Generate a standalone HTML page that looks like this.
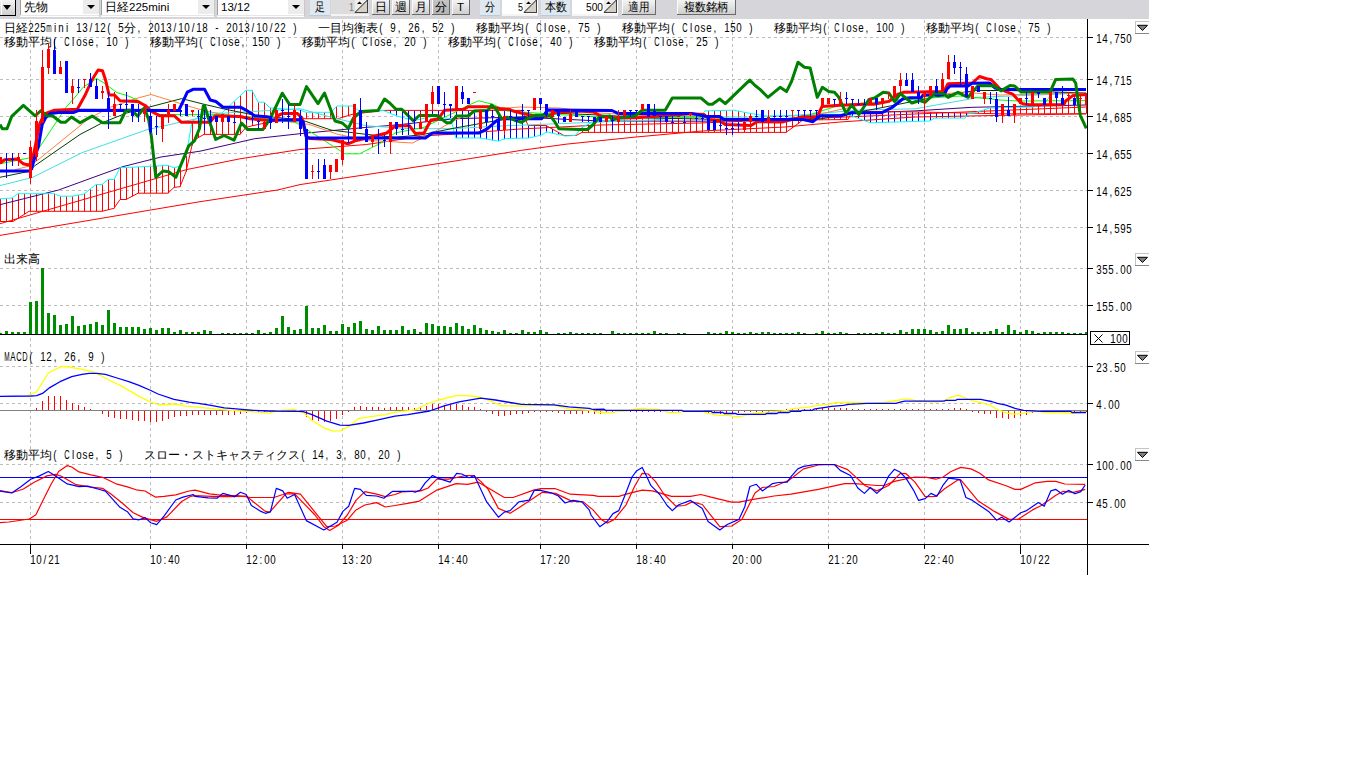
<!DOCTYPE html>
<html><head><meta charset="utf-8"><style>html,body{margin:0;padding:0;width:1366px;height:768px;overflow:hidden;background:#fff}</style></head>
<body><svg width="1366" height="768" viewBox="0 0 1366 768" style="position:absolute;left:0;top:0" font-family='"Liberation Sans", sans-serif'>
<rect width="1366" height="768" fill="#fff"/>
<line x1="30.5" y1="20" x2="30.5" y2="544" stroke="#bdbdbd" stroke-dasharray="3,3"/><line x1="150.5" y1="20" x2="150.5" y2="544" stroke="#bdbdbd" stroke-dasharray="3,3"/><line x1="246.5" y1="20" x2="246.5" y2="544" stroke="#bdbdbd" stroke-dasharray="3,3"/><line x1="342.5" y1="20" x2="342.5" y2="544" stroke="#bdbdbd" stroke-dasharray="3,3"/><line x1="438.5" y1="20" x2="438.5" y2="544" stroke="#bdbdbd" stroke-dasharray="3,3"/><line x1="540.5" y1="20" x2="540.5" y2="544" stroke="#bdbdbd" stroke-dasharray="3,3"/><line x1="636.5" y1="20" x2="636.5" y2="544" stroke="#bdbdbd" stroke-dasharray="3,3"/><line x1="732.5" y1="20" x2="732.5" y2="544" stroke="#bdbdbd" stroke-dasharray="3,3"/><line x1="828.5" y1="20" x2="828.5" y2="544" stroke="#bdbdbd" stroke-dasharray="3,3"/><line x1="924.5" y1="20" x2="924.5" y2="544" stroke="#bdbdbd" stroke-dasharray="3,3"/><line x1="1020.5" y1="20" x2="1020.5" y2="544" stroke="#bdbdbd" stroke-dasharray="3,3"/><line x1="0" y1="37.5" x2="1087" y2="37.5" stroke="#bdbdbd" stroke-dasharray="3,3"/><line x1="0" y1="79.5" x2="1087" y2="79.5" stroke="#bdbdbd" stroke-dasharray="3,3"/><line x1="0" y1="116.5" x2="1087" y2="116.5" stroke="#bdbdbd" stroke-dasharray="3,3"/><line x1="0" y1="153.5" x2="1087" y2="153.5" stroke="#bdbdbd" stroke-dasharray="3,3"/><line x1="0" y1="190.5" x2="1087" y2="190.5" stroke="#bdbdbd" stroke-dasharray="3,3"/><line x1="0" y1="227.5" x2="1087" y2="227.5" stroke="#bdbdbd" stroke-dasharray="3,3"/><line x1="0" y1="268.5" x2="1087" y2="268.5" stroke="#bdbdbd" stroke-dasharray="3,3"/><line x1="0" y1="305.5" x2="1087" y2="305.5" stroke="#bdbdbd" stroke-dasharray="3,3"/><line x1="0" y1="366.5" x2="1087" y2="366.5" stroke="#bdbdbd" stroke-dasharray="3,3"/><line x1="0" y1="403.5" x2="1087" y2="403.5" stroke="#bdbdbd" stroke-dasharray="3,3"/><line x1="0" y1="464.5" x2="1087" y2="464.5" stroke="#bdbdbd" stroke-dasharray="3,3"/><line x1="0" y1="502.5" x2="1087" y2="502.5" stroke="#bdbdbd" stroke-dasharray="3,3"/>
<g clip-path="url(#cm)"><rect x="0" y="198.8" width="1" height="22.7" fill="#ff0000"/><rect x="6" y="198.4" width="1" height="23.1" fill="#ff0000"/><rect x="12" y="198.0" width="1" height="23.5" fill="#ff0000"/><rect x="18" y="193.7" width="1" height="24.6" fill="#ff0000"/><rect x="24" y="193.7" width="1" height="20.8" fill="#ff0000"/><rect x="30" y="193.7" width="1" height="17.6" fill="#ff0000"/><rect x="36" y="193.7" width="1" height="17.6" fill="#ff0000"/><rect x="42" y="193.7" width="1" height="17.6" fill="#ff0000"/><rect x="48" y="193.7" width="1" height="17.6" fill="#ff0000"/><rect x="54" y="193.7" width="1" height="17.6" fill="#ff0000"/><rect x="60" y="196.2" width="1" height="15.1" fill="#ff0000"/><rect x="66" y="196.2" width="1" height="15.1" fill="#ff0000"/><rect x="72" y="196.2" width="1" height="15.1" fill="#ff0000"/><rect x="78" y="195.1" width="1" height="16.2" fill="#ff0000"/><rect x="84" y="194.0" width="1" height="17.3" fill="#ff0000"/><rect x="90" y="189.2" width="1" height="22.1" fill="#ff0000"/><rect x="96" y="184.5" width="1" height="26.8" fill="#ff0000"/><rect x="102" y="184.5" width="1" height="26.8" fill="#ff0000"/><rect x="108" y="179.5" width="1" height="30.3" fill="#ff0000"/><rect x="114" y="179.5" width="1" height="28.8" fill="#ff0000"/><rect x="120" y="167.8" width="1" height="31.7" fill="#ff0000"/><rect x="126" y="167.5" width="1" height="32.0" fill="#ff0000"/><rect x="132" y="167.2" width="1" height="29.1" fill="#ff0000"/><rect x="138" y="166.9" width="1" height="26.3" fill="#ff0000"/><rect x="144" y="166.6" width="1" height="26.6" fill="#ff0000"/><rect x="150" y="166.3" width="1" height="26.9" fill="#ff0000"/><rect x="156" y="166.0" width="1" height="27.2" fill="#ff0000"/><rect x="162" y="165.7" width="1" height="27.5" fill="#ff0000"/><rect x="168" y="165.4" width="1" height="27.8" fill="#ff0000"/><rect x="174" y="167.8" width="1" height="19.6" fill="#ff0000"/><rect x="180" y="166.0" width="1" height="20.7" fill="#ff0000"/><rect x="186" y="156.0" width="1" height="15.7" fill="#ff0000"/><rect x="192" y="121.5" width="1" height="23.8" fill="#ff0000"/><rect x="198" y="117.2" width="1" height="20.6" fill="#ff0000"/><rect x="204" y="113.0" width="1" height="21.4" fill="#ff0000"/><rect x="210" y="113.0" width="1" height="21.4" fill="#ff0000"/><rect x="216" y="113.0" width="1" height="21.4" fill="#ff0000"/><rect x="222" y="113.0" width="1" height="21.4" fill="#ff0000"/><rect x="228" y="107.2" width="1" height="27.2" fill="#ff0000"/><rect x="234" y="101.5" width="1" height="32.9" fill="#ff0000"/><rect x="240" y="95.9" width="1" height="38.5" fill="#ff0000"/><rect x="246" y="90.3" width="1" height="37.0" fill="#ff0000"/><rect x="252" y="90.3" width="1" height="35.5" fill="#ff0000"/><rect x="258" y="102.2" width="1" height="22.3" fill="#ff0000"/><rect x="264" y="102.2" width="1" height="21.1" fill="#ff0000"/><rect x="270" y="107.9" width="1" height="14.1" fill="#ff0000"/><rect x="276" y="108.3" width="1" height="12.9" fill="#ff0000"/><rect x="282" y="108.7" width="1" height="11.7" fill="#ff0000"/><rect x="288" y="109.2" width="1" height="10.5" fill="#ff0000"/><rect x="294" y="109.6" width="1" height="9.3" fill="#ff0000"/><rect x="300" y="110.0" width="1" height="8.7" fill="#ff0000"/><rect x="306" y="112.3" width="1" height="6.4" fill="#ff0000"/><rect x="312" y="112.3" width="1" height="6.4" fill="#ff0000"/><rect x="318" y="112.3" width="1" height="6.4" fill="#ff0000"/><rect x="324" y="112.3" width="1" height="6.4" fill="#ff0000"/><rect x="330" y="112.3" width="1" height="6.4" fill="#ff0000"/><rect x="336" y="107.0" width="1" height="11.7" fill="#ff0000"/><rect x="342" y="106.0" width="1" height="11.5" fill="#ff0000"/><rect x="348" y="106.0" width="1" height="9.6" fill="#ff0000"/><rect x="354" y="106.8" width="1" height="7.3" fill="#ff0000"/><rect x="360" y="111.4" width="1" height="2.0" fill="#ff0000"/><rect x="366" y="111.1" width="1" height="1.5" fill="#ff0000"/><rect x="390" y="110.4" width="1" height="2.8" fill="#0000ff"/><rect x="396" y="110.4" width="1" height="5.2" fill="#0000ff"/><rect x="402" y="110.4" width="1" height="7.0" fill="#0000ff"/><rect x="408" y="110.4" width="1" height="8.6" fill="#0000ff"/><rect x="414" y="110.4" width="1" height="10.2" fill="#0000ff"/><rect x="420" y="110.4" width="1" height="8.8" fill="#0000ff"/><rect x="426" y="110.4" width="1" height="7.5" fill="#0000ff"/><rect x="432" y="110.4" width="1" height="6.1" fill="#0000ff"/><rect x="438" y="110.4" width="1" height="6.8" fill="#0000ff"/><rect x="444" y="110.4" width="1" height="7.4" fill="#0000ff"/><rect x="450" y="110.4" width="1" height="8.1" fill="#0000ff"/><rect x="456" y="110.4" width="1" height="27.6" fill="#0000ff"/><rect x="462" y="110.4" width="1" height="27.6" fill="#0000ff"/><rect x="468" y="110.4" width="1" height="27.6" fill="#0000ff"/><rect x="474" y="110.4" width="1" height="27.6" fill="#0000ff"/><rect x="480" y="110.4" width="1" height="27.6" fill="#0000ff"/><rect x="486" y="110.4" width="1" height="28.6" fill="#0000ff"/><rect x="492" y="110.4" width="1" height="29.7" fill="#0000ff"/><rect x="498" y="110.4" width="1" height="30.7" fill="#0000ff"/><rect x="504" y="110.4" width="1" height="28.7" fill="#0000ff"/><rect x="510" y="110.4" width="1" height="28.1" fill="#0000ff"/><rect x="516" y="110.4" width="1" height="27.9" fill="#0000ff"/><rect x="522" y="110.4" width="1" height="27.8" fill="#0000ff"/><rect x="528" y="125.5" width="1" height="12.5" fill="#0000ff"/><rect x="534" y="125.5" width="1" height="11.3" fill="#0000ff"/><rect x="540" y="125.5" width="1" height="9.9" fill="#0000ff"/><rect x="546" y="125.5" width="1" height="6.8" fill="#0000ff"/><rect x="552" y="128.8" width="1" height="4.3" fill="#0000ff"/><rect x="558" y="132.2" width="1" height="2.3" fill="#0000ff"/><rect x="582" y="127.4" width="1" height="5.0" fill="#ff0000"/><rect x="588" y="124.3" width="1" height="8.1" fill="#ff0000"/><rect x="594" y="122.1" width="1" height="10.3" fill="#ff0000"/><rect x="600" y="121.4" width="1" height="11.0" fill="#ff0000"/><rect x="606" y="120.8" width="1" height="11.6" fill="#ff0000"/><rect x="612" y="120.2" width="1" height="12.2" fill="#ff0000"/><rect x="618" y="119.7" width="1" height="12.7" fill="#ff0000"/><rect x="624" y="119.3" width="1" height="13.1" fill="#ff0000"/><rect x="630" y="118.8" width="1" height="13.6" fill="#ff0000"/><rect x="636" y="118.3" width="1" height="14.1" fill="#ff0000"/><rect x="642" y="118.0" width="1" height="14.4" fill="#ff0000"/><rect x="648" y="117.9" width="1" height="14.5" fill="#ff0000"/><rect x="654" y="117.8" width="1" height="14.6" fill="#ff0000"/><rect x="660" y="117.7" width="1" height="14.7" fill="#ff0000"/><rect x="666" y="117.6" width="1" height="14.8" fill="#ff0000"/><rect x="672" y="117.5" width="1" height="14.9" fill="#ff0000"/><rect x="678" y="117.4" width="1" height="15.0" fill="#ff0000"/><rect x="684" y="117.3" width="1" height="15.1" fill="#ff0000"/><rect x="690" y="117.2" width="1" height="15.2" fill="#ff0000"/><rect x="696" y="117.1" width="1" height="15.3" fill="#ff0000"/><rect x="702" y="114.6" width="1" height="17.8" fill="#ff0000"/><rect x="708" y="110.8" width="1" height="21.6" fill="#ff0000"/><rect x="714" y="110.7" width="1" height="21.7" fill="#ff0000"/><rect x="720" y="110.5" width="1" height="21.9" fill="#ff0000"/><rect x="726" y="110.4" width="1" height="22.0" fill="#ff0000"/><rect x="732" y="110.2" width="1" height="22.2" fill="#ff0000"/><rect x="738" y="111.0" width="1" height="21.4" fill="#ff0000"/><rect x="744" y="112.2" width="1" height="20.2" fill="#ff0000"/><rect x="750" y="113.3" width="1" height="19.1" fill="#ff0000"/><rect x="756" y="114.4" width="1" height="18.0" fill="#ff0000"/><rect x="762" y="115.4" width="1" height="17.0" fill="#ff0000"/><rect x="768" y="115.9" width="1" height="16.5" fill="#ff0000"/><rect x="774" y="115.9" width="1" height="16.5" fill="#ff0000"/><rect x="780" y="116.0" width="1" height="16.4" fill="#ff0000"/><rect x="786" y="116.0" width="1" height="16.4" fill="#ff0000"/><rect x="792" y="115.9" width="1" height="12.2" fill="#ff0000"/><rect x="798" y="115.4" width="1" height="8.2" fill="#ff0000"/><rect x="804" y="115.0" width="1" height="5.0" fill="#ff0000"/><rect x="810" y="114.5" width="1" height="5.4" fill="#ff0000"/><rect x="816" y="114.1" width="1" height="5.8" fill="#ff0000"/><rect x="822" y="114.1" width="1" height="5.7" fill="#ff0000"/><rect x="828" y="114.2" width="1" height="5.5" fill="#ff0000"/><rect x="834" y="114.3" width="1" height="5.4" fill="#ff0000"/><rect x="840" y="114.4" width="1" height="5.2" fill="#ff0000"/><rect x="846" y="114.5" width="1" height="5.1" fill="#ff0000"/><rect x="852" y="111.1" width="1" height="4.9" fill="#0000ff"/><rect x="858" y="111.2" width="1" height="7.1" fill="#0000ff"/><rect x="864" y="111.3" width="1" height="9.3" fill="#0000ff"/><rect x="870" y="111.3" width="1" height="11.5" fill="#0000ff"/><rect x="876" y="111.4" width="1" height="11.2" fill="#0000ff"/><rect x="882" y="111.5" width="1" height="10.9" fill="#0000ff"/><rect x="888" y="111.6" width="1" height="10.7" fill="#0000ff"/><rect x="894" y="111.7" width="1" height="10.4" fill="#0000ff"/><rect x="900" y="111.7" width="1" height="10.2" fill="#0000ff"/><rect x="906" y="111.8" width="1" height="9.9" fill="#0000ff"/><rect x="912" y="111.9" width="1" height="9.6" fill="#0000ff"/><rect x="918" y="112.0" width="1" height="9.4" fill="#0000ff"/><rect x="924" y="112.1" width="1" height="9.1" fill="#0000ff"/><rect x="930" y="112.2" width="1" height="8.8" fill="#0000ff"/><rect x="936" y="112.4" width="1" height="5.7" fill="#0000ff"/><rect x="942" y="112.5" width="1" height="5.6" fill="#0000ff"/><rect x="948" y="112.6" width="1" height="5.5" fill="#0000ff"/><rect x="954" y="112.8" width="1" height="5.3" fill="#0000ff"/><rect x="960" y="112.9" width="1" height="5.2" fill="#0000ff"/><rect x="966" y="113.0" width="1" height="3.8" fill="#0000ff"/><rect x="978" y="111.8" width="1" height="1.5" fill="#ff0000"/><rect x="984" y="109.9" width="1" height="3.6" fill="#ff0000"/><rect x="990" y="108.0" width="1" height="5.6" fill="#ff0000"/><rect x="996" y="107.8" width="1" height="5.9" fill="#ff0000"/><rect x="1002" y="107.6" width="1" height="6.2" fill="#ff0000"/><rect x="1008" y="107.4" width="1" height="6.4" fill="#ff0000"/><rect x="1014" y="107.3" width="1" height="6.5" fill="#ff0000"/><rect x="1020" y="107.2" width="1" height="6.6" fill="#ff0000"/><rect x="1026" y="107.1" width="1" height="6.7" fill="#ff0000"/><rect x="1032" y="107.0" width="1" height="6.8" fill="#ff0000"/><rect x="1038" y="105.5" width="1" height="8.3" fill="#ff0000"/><rect x="1044" y="103.4" width="1" height="10.4" fill="#ff0000"/><rect x="1050" y="96.0" width="1" height="17.8" fill="#ff0000"/><rect x="1056" y="92.5" width="1" height="21.3" fill="#ff0000"/><rect x="1062" y="92.6" width="1" height="21.2" fill="#ff0000"/><rect x="1068" y="92.7" width="1" height="21.1" fill="#ff0000"/><rect x="1074" y="92.8" width="1" height="21.0" fill="#ff0000"/><rect x="1080" y="92.9" width="1" height="20.9" fill="#ff0000"/><rect x="1086" y="93.0" width="1" height="20.8" fill="#ff0000"/><polyline points="0.0,235.4 200.0,201.7 277.5,190.0 300.0,184.6 366.6,174.6 455.0,161.0 521.6,150.3 566.0,144.2 636.0,137.0 703.5,130.9 785.0,127.0 840.0,122.0 915.0,117.0 1086.0,113.8" fill="none" stroke="#ff0000" stroke-width="1" stroke-linejoin="round" /><polyline points="0.0,223.7 187.0,169.5 240.0,158.8 300.0,149.5 366.6,144.5 424.0,135.9 455.0,134.0 520.0,129.0 600.0,125.0 700.0,123.0 800.0,119.0 915.0,114.0 1086.0,107.0" fill="none" stroke="#ff0000" stroke-width="1" stroke-linejoin="round" /><polyline points="0.0,204.7 58.6,190.0 123.0,166.6 161.0,157.0 200.0,151.2 254.6,138.7 300.0,133.7 366.6,127.3 395.0,125.1 455.0,118.7 520.0,117.0 600.0,121.0 700.0,121.2 760.0,120.5 860.0,113.0 915.0,110.9 972.0,107.3 1086.0,105.0" fill="none" stroke="#400080" stroke-width="1" stroke-linejoin="round" /><polyline points="0.0,221.5 13.0,221.5 29.0,211.3 102.0,211.3 114.0,208.3 120.0,199.5 126.0,199.5 138.0,193.2 168.0,193.2 174.0,187.4 180.0,186.7 186.0,171.7 193.0,140.9 200.0,136.6 204.0,134.4 240.0,134.4 246.0,127.3 252.0,125.8 270.0,122.0 295.0,118.7 338.0,118.7 352.0,114.4 383.0,110.4 522.0,110.4 528.0,125.5 546.0,125.5 564.0,135.5 576.0,135.5 582.0,132.4 786.0,132.4 803.0,120.0 848.0,119.5 852.0,111.1 920.0,112.0 1000.0,113.8 1086.0,113.8" fill="none" stroke="#ff0000" stroke-width="1" stroke-linejoin="round" /><polyline points="0.0,198.8 12.0,198.0 18.0,193.7 54.0,193.7 60.0,196.2 72.0,196.2 84.0,194.0 96.0,184.5 102.0,184.5 108.0,179.5 114.0,179.5 120.0,167.8 168.0,165.4 174.0,167.8 180.0,166.0 186.0,156.0 192.0,121.5 204.0,113.0 222.0,113.0 234.0,101.5 246.0,90.3 252.0,90.3 258.0,102.2 264.0,102.2 270.0,107.9 300.0,110.0 306.0,112.3 331.0,112.3 337.0,106.0 353.0,106.0 359.5,111.4 383.0,110.4 397.0,116.0 414.0,120.6 432.0,116.5 450.7,118.6 455.8,138.0 480.0,138.0 498.0,141.1 505.6,138.6 529.0,138.0 541.5,135.0 546.6,131.9 565.0,136.0 575.3,135.5 582.5,126.8 592.7,122.2 612.0,120.2 640.0,118.0 700.0,117.0 705.0,110.9 734.0,110.2 748.0,113.0 765.0,115.9 790.0,116.0 817.0,114.0 848.0,114.5 870.0,122.8 930.0,121.0 934.0,118.1 965.0,118.1 969.0,113.1 975.0,112.7 990.0,108.0 1005.0,107.5 1034.0,107.0 1045.0,103.0 1050.0,96.0 1054.0,92.5 1086.0,93.0" fill="none" stroke="#00ffff" stroke-width="1" stroke-linejoin="round" /><polyline points="0.0,185.6 32.0,177.6 82.0,152.7 146.0,130.0 183.0,121.5 226.0,113.0 300.0,108.7 331.0,117.2 366.6,125.8 409.6,128.7 453.0,128.7 500.0,126.0 550.0,124.0 600.0,122.0 650.0,120.0 700.0,117.0 760.0,117.0 800.0,115.0 860.0,110.0 915.0,108.8 979.5,97.3 1086.0,93.0" fill="none" stroke="#40e0e0" stroke-width="1" stroke-linejoin="round" /><polyline points="0.0,177.3 29.0,171.4 35.0,165.6 80.0,134.5 102.5,122.7 126.0,113.2 151.0,106.6 181.6,98.6 204.5,104.4 226.0,109.4 254.6,115.1 302.0,120.1 331.0,130.1 366.6,134.4 395.0,137.3 420.0,135.0 455.0,128.0 500.0,120.0 550.0,113.0 600.0,115.0 650.0,118.0 700.0,119.0 760.0,121.0 820.0,119.0 880.0,108.0 935.0,97.0 975.0,90.5 1010.0,90.5 1086.0,93.0" fill="none" stroke="#004000" stroke-width="1" stroke-linejoin="round" /><polyline points="15.0,169.7 29.0,166.2 37.5,160.3 80.0,125.8 88.0,119.0 110.0,107.3 136.0,98.6 151.0,94.5 168.0,99.7 197.0,108.7 220.0,114.0 260.0,118.0 309.0,124.4 338.0,134.4 366.6,140.2 412.5,143.0 431.0,133.7 455.0,120.1 480.0,110.0 520.0,107.0 560.0,108.0 600.0,113.0 650.0,116.0 700.0,117.0 760.0,122.0 803.0,118.0 860.0,105.0 900.0,100.0 960.0,92.0 1000.0,95.0 1086.0,93.0" fill="none" stroke="#ff8040" stroke-width="1" stroke-linejoin="round" /><polyline points="0.0,163.8 29.0,158.0 37.5,150.4 66.0,107.3 72.6,100.0 83.5,86.9 96.6,78.4 105.4,84.0 117.0,92.7 127.4,95.6 140.6,101.5 149.3,110.3 160.0,114.5 220.0,114.7 250.0,117.0 295.0,122.0 323.7,140.2 345.0,153.8 359.5,153.8 381.0,143.0 395.0,133.0 424.0,127.3 455.0,112.2 467.0,105.8 478.7,100.8 493.0,104.4 507.0,111.0 550.0,114.0 600.0,117.0 650.0,117.0 700.0,117.0 760.0,120.0 800.0,118.0 840.0,105.0 900.0,100.0 960.0,96.0 1000.0,100.0 1020.0,101.0 1086.0,100.6" fill="none" stroke="#00ff00" stroke-width="1" stroke-linejoin="round" /><polyline points="0.0,163.2 4.7,159.7 17.6,159.1 23.4,163.8 28.1,165.0 31.6,163.0 35.1,146.8 39.8,123.4 44.5,114.0 53.9,110.3 77.3,109.2 84.9,95.6 92.2,79.5 98.1,70.0 102.5,70.7 105.4,79.5 109.1,94.9 114.2,94.9 120.0,100.8 137.6,101.5 145.7,105.8 151.5,111.5 160.0,115.8 174.4,115.8 181.5,122.3 200.2,122.3 210.0,122.2 215.0,116.1 240.0,116.5 250.0,118.8 270.0,120.5 275.0,120.0 279.0,115.0 283.0,113.5 297.5,113.6 302.0,118.0 306.0,136.0 310.0,138.5 331.0,139.5 348.0,143.8 355.2,140.9 363.8,138.7 386.7,133.0 395.3,125.8 409.6,125.8 415.4,133.6 424.0,133.0 431.0,120.0 438.0,119.0 444.7,110.2 464.0,109.2 468.0,106.7 488.0,106.7 500.0,108.5 510.0,109.5 513.0,111.0 523.0,113.5 535.0,116.0 547.0,116.5 556.0,112.5 579.0,111.0 593.3,112.0 601.9,116.6 613.6,117.8 636.5,117.8 691.0,113.8 703.9,114.4 709.6,119.5 719.6,120.9 725.3,124.5 751.0,125.5 757.0,121.8 782.0,122.0 803.0,116.7 817.0,117.0 822.0,106.5 840.0,105.3 865.0,104.3 874.0,104.3 888.9,101.4 897.5,94.4 903.3,92.3 943.7,91.6 948.0,83.7 972.3,83.0 979.5,76.5 986.6,78.7 990.9,79.4 994.0,82.5 1000.0,89.0 1005.5,91.4 1012.8,94.2 1020.0,101.9 1022.8,103.8 1029.2,104.7 1063.8,104.7 1065.6,101.0 1072.9,95.6 1086.0,94.6" fill="none" stroke="#ff0000" stroke-width="3" stroke-linejoin="round" /><polyline points="0.0,171.1 29.3,171.1 31.6,169.0 35.1,156.2 38.6,145.7 42.2,124.6 45.7,117.6 50.4,113.5 58.6,112.5 73.2,112.5 79.0,110.3 178.7,110.4 183.0,101.5 187.3,92.2 193.0,89.3 204.5,89.3 210.2,100.0 215.9,101.5 223.1,107.2 240.3,107.2 246.0,110.1 254.6,115.8 269.0,117.0 271.8,120.1 300.4,120.1 303.3,122.0 306.5,138.0 425.4,138.0 432.5,133.1 478.7,133.1 487.2,128.8 497.3,120.2 501.6,118.7 541.7,118.7 547.4,110.1 611.9,110.5 618.0,113.4 691.0,113.4 705.3,116.2 719.6,116.6 723.9,119.5 803.0,119.5 813.0,121.7 820.0,115.8 841.0,115.8 851.0,112.7 882.0,112.7 892.0,107.5 903.0,98.8 910.0,97.8 921.0,97.8 923.0,95.0 944.0,95.0 947.0,89.0 950.0,86.1 968.0,86.1 972.0,83.2 989.5,83.0 995.2,88.0 1001.0,89.6 1086.0,89.6" fill="none" stroke="#0000ff" stroke-width="3" stroke-linejoin="round" /><polyline points="0.0,124.6 2.3,128.7 7.0,128.7 11.7,116.4 23.4,105.3 35.1,115.8 41.0,110.5 46.8,115.8 52.7,116.0 60.9,122.2 65.6,122.2 71.4,117.0 80.0,122.8 92.2,116.1 102.5,122.7 120.0,122.7 125.9,110.3 131.8,110.3 137.6,116.1 144.3,107.9 148.6,119.4 151.5,137.3 155.8,177.4 162.9,171.0 168.7,171.7 175.8,177.4 188.7,145.9 194.4,140.9 199.4,128.7 203.3,106.0 204.5,105.5 209.0,120.0 215.7,139.5 224.0,135.5 234.0,140.2 241.5,123.0 247.5,129.4 263.0,129.4 270.0,119.0 282.3,93.2 289.5,104.4 300.0,104.4 306.5,86.6 318.0,103.6 324.5,93.0 335.0,121.0 342.3,123.0 348.3,128.3 353.5,118.0 361.0,111.5 378.0,110.6 384.5,99.0 390.0,103.3 395.9,109.2 401.7,109.2 413.4,120.9 419.3,115.5 436.9,115.5 446.6,122.8 450.5,122.8 456.4,116.0 468.1,116.0 474.0,111.1 487.7,110.5 491.5,105.1 495.8,108.7 501.6,118.7 507.3,117.3 514.5,120.2 521.6,122.3 527.4,118.7 536.0,115.2 550.3,115.9 554.6,121.6 558.9,128.8 579.0,129.5 587.5,129.5 593.3,124.5 599.0,117.3 610.0,115.9 612.2,120.2 619.3,117.3 635.1,115.9 642.2,110.2 665.2,110.2 672.3,98.0 701.0,98.0 708.2,104.2 712.4,104.2 719.6,99.0 725.3,103.7 749.7,80.1 755.4,85.8 760.0,89.4 767.9,97.3 780.1,87.3 786.5,91.6 791.5,81.5 798.0,62.2 804.4,67.2 810.1,67.9 817.3,97.3 822.3,87.3 828.8,91.6 834.5,92.3 838.8,97.3 846.0,113.1 851.7,105.2 858.9,114.5 868.9,99.5 874.6,98.0 883.2,92.3 888.9,93.0 894.7,101.6 900.4,93.7 911.9,103.0 920.0,100.5 925.0,102.3 935.1,93.0 943.7,93.7 948.0,97.3 958.0,92.3 968.0,97.3 978.0,85.8 993.8,85.8 1001.0,90.9 1010.0,85.5 1014.6,86.0 1021.0,91.9 1050.1,91.9 1055.6,79.6 1072.9,79.1 1075.7,83.0 1078.5,104.0 1080.4,115.6 1086.3,128.4" fill="none" stroke="#008000" stroke-width="3" stroke-linejoin="round" /><rect x="0" y="157" width="1" height="7" fill="#ff0000"/><rect x="-1" y="157" width="3" height="7" fill="#ff0000"/><rect x="6" y="153" width="1" height="25" fill="#0000ff"/><rect x="5" y="159" width="3" height="1" fill="#0000ff"/><rect x="12" y="153" width="1" height="13" fill="#0000ff"/><rect x="11" y="159" width="3" height="1" fill="#0000ff"/><rect x="18" y="153" width="1" height="13" fill="#ff0000"/><rect x="17" y="157" width="3" height="3" fill="#ff0000"/><rect x="24" y="153" width="1" height="1" fill="#0000ff"/><rect x="23" y="153" width="3" height="1" fill="#0000ff"/><rect x="30" y="141" width="1" height="43" fill="#ff0000"/><rect x="29" y="147" width="3" height="31" fill="#ff0000"/><rect x="36" y="110" width="1" height="51" fill="#ff0000"/><rect x="35" y="121" width="3" height="36" fill="#ff0000"/><rect x="42" y="50" width="1" height="73" fill="#ff0000"/><rect x="41" y="67" width="3" height="56" fill="#ff0000"/><rect x="48" y="44" width="1" height="30" fill="#ff0000"/><rect x="47" y="49" width="3" height="19" fill="#ff0000"/><rect x="54" y="39" width="1" height="35" fill="#0000ff"/><rect x="53" y="50" width="3" height="24" fill="#0000ff"/><rect x="60" y="61" width="1" height="13" fill="#ff0000"/><rect x="59" y="67" width="3" height="7" fill="#ff0000"/><rect x="66" y="61" width="1" height="32" fill="#0000ff"/><rect x="65" y="61" width="3" height="32" fill="#0000ff"/><rect x="72" y="79" width="1" height="25" fill="#ff0000"/><rect x="71" y="86" width="3" height="7" fill="#ff0000"/><rect x="78" y="79" width="1" height="14" fill="#0000ff"/><rect x="77" y="87" width="3" height="1" fill="#0000ff"/><rect x="84" y="79" width="1" height="9" fill="#ff0000"/><rect x="83" y="79" width="3" height="1" fill="#ff0000"/><rect x="90" y="73" width="1" height="14" fill="#0000ff"/><rect x="89" y="79" width="3" height="8" fill="#0000ff"/><rect x="96" y="79" width="1" height="20" fill="#0000ff"/><rect x="95" y="86" width="3" height="13" fill="#0000ff"/><rect x="102" y="86" width="1" height="13" fill="#ff0000"/><rect x="101" y="91" width="3" height="2" fill="#ff0000"/><rect x="108" y="92" width="1" height="37" fill="#0000ff"/><rect x="107" y="98" width="3" height="12" fill="#0000ff"/><rect x="114" y="92" width="1" height="24" fill="#ff0000"/><rect x="113" y="104" width="3" height="12" fill="#ff0000"/><rect x="120" y="104" width="1" height="6" fill="#0000ff"/><rect x="119" y="104" width="3" height="1" fill="#0000ff"/><rect x="126" y="92" width="1" height="18" fill="#0000ff"/><rect x="125" y="104" width="3" height="1" fill="#0000ff"/><rect x="132" y="104" width="1" height="18" fill="#0000ff"/><rect x="131" y="104" width="3" height="12" fill="#0000ff"/><rect x="138" y="104" width="1" height="18" fill="#0000ff"/><rect x="137" y="110" width="3" height="1" fill="#0000ff"/><rect x="144" y="104" width="1" height="18" fill="#ff0000"/><rect x="143" y="109" width="3" height="5" fill="#ff0000"/><rect x="150" y="109" width="1" height="25" fill="#0000ff"/><rect x="149" y="116" width="3" height="16" fill="#0000ff"/><rect x="156" y="116" width="1" height="19" fill="#0000ff"/><rect x="155" y="126" width="3" height="1" fill="#0000ff"/><rect x="162" y="116" width="1" height="26" fill="#ff0000"/><rect x="161" y="116" width="3" height="13" fill="#ff0000"/><rect x="168" y="104" width="1" height="19" fill="#ff0000"/><rect x="167" y="110" width="3" height="4" fill="#ff0000"/><rect x="174" y="104" width="1" height="7" fill="#ff0000"/><rect x="173" y="104" width="3" height="7" fill="#ff0000"/><rect x="180" y="108" width="1" height="8" fill="#0000ff"/><rect x="179" y="110" width="3" height="2" fill="#0000ff"/><rect x="186" y="104" width="1" height="12" fill="#0000ff"/><rect x="185" y="104" width="3" height="12" fill="#0000ff"/><rect x="192" y="110" width="1" height="6" fill="#ff0000"/><rect x="191" y="110" width="3" height="2" fill="#ff0000"/><rect x="198" y="110" width="1" height="13" fill="#0000ff"/><rect x="197" y="116" width="3" height="1" fill="#0000ff"/><rect x="204" y="110" width="1" height="20" fill="#0000ff"/><rect x="203" y="118" width="3" height="1" fill="#0000ff"/><rect x="210" y="110" width="1" height="13" fill="#0000ff"/><rect x="209" y="116" width="3" height="6" fill="#0000ff"/><rect x="216" y="116" width="1" height="6" fill="#0000ff"/><rect x="215" y="116" width="3" height="6" fill="#0000ff"/><rect x="222" y="114" width="1" height="8" fill="#ff0000"/><rect x="221" y="114" width="3" height="8" fill="#ff0000"/><rect x="228" y="116" width="1" height="6" fill="#0000ff"/><rect x="227" y="116" width="3" height="6" fill="#0000ff"/><rect x="234" y="116" width="1" height="7" fill="#0000ff"/><rect x="233" y="122" width="3" height="1" fill="#0000ff"/><rect x="240" y="116" width="1" height="4" fill="#ff0000"/><rect x="239" y="116" width="3" height="2" fill="#ff0000"/><rect x="246" y="116" width="1" height="7" fill="#0000ff"/><rect x="245" y="118" width="3" height="1" fill="#0000ff"/><rect x="252" y="116" width="1" height="7" fill="#0000ff"/><rect x="251" y="118" width="3" height="1" fill="#0000ff"/><rect x="258" y="120" width="1" height="9" fill="#0000ff"/><rect x="257" y="121" width="3" height="1" fill="#0000ff"/><rect x="264" y="122" width="1" height="7" fill="#ff0000"/><rect x="263" y="122" width="3" height="7" fill="#ff0000"/><rect x="270" y="116" width="1" height="13" fill="#0000ff"/><rect x="269" y="116" width="3" height="7" fill="#0000ff"/><rect x="276" y="110" width="1" height="13" fill="#ff0000"/><rect x="275" y="110" width="3" height="13" fill="#ff0000"/><rect x="282" y="99" width="1" height="24" fill="#0000ff"/><rect x="281" y="110" width="3" height="1" fill="#0000ff"/><rect x="288" y="104" width="1" height="25" fill="#0000ff"/><rect x="287" y="116" width="3" height="1" fill="#0000ff"/><rect x="294" y="104" width="1" height="18" fill="#ff0000"/><rect x="293" y="110" width="3" height="12" fill="#ff0000"/><rect x="300" y="110" width="1" height="26" fill="#0000ff"/><rect x="299" y="116" width="3" height="13" fill="#0000ff"/><rect x="306" y="129" width="1" height="50" fill="#0000ff"/><rect x="305" y="129" width="3" height="50" fill="#0000ff"/><rect x="312" y="165" width="1" height="14" fill="#ff0000"/><rect x="311" y="171" width="3" height="1" fill="#ff0000"/><rect x="318" y="159" width="1" height="20" fill="#0000ff"/><rect x="317" y="171" width="3" height="1" fill="#0000ff"/><rect x="324" y="159" width="1" height="20" fill="#0000ff"/><rect x="323" y="165" width="3" height="14" fill="#0000ff"/><rect x="330" y="165" width="1" height="14" fill="#ff0000"/><rect x="329" y="165" width="3" height="7" fill="#ff0000"/><rect x="336" y="159" width="1" height="13" fill="#ff0000"/><rect x="335" y="159" width="3" height="13" fill="#ff0000"/><rect x="342" y="140" width="1" height="25" fill="#ff0000"/><rect x="341" y="140" width="3" height="20" fill="#ff0000"/><rect x="348" y="129" width="1" height="14" fill="#0000ff"/><rect x="347" y="142" width="3" height="1" fill="#0000ff"/><rect x="354" y="104" width="1" height="37" fill="#ff0000"/><rect x="353" y="104" width="3" height="37" fill="#ff0000"/><rect x="360" y="98" width="1" height="31" fill="#0000ff"/><rect x="359" y="110" width="3" height="19" fill="#0000ff"/><rect x="366" y="122" width="1" height="20" fill="#0000ff"/><rect x="365" y="129" width="3" height="13" fill="#0000ff"/><rect x="372" y="135" width="1" height="12" fill="#ff0000"/><rect x="371" y="135" width="3" height="7" fill="#ff0000"/><rect x="378" y="129" width="1" height="25" fill="#0000ff"/><rect x="377" y="137" width="3" height="1" fill="#0000ff"/><rect x="384" y="135" width="1" height="12" fill="#0000ff"/><rect x="383" y="140" width="3" height="1" fill="#0000ff"/><rect x="390" y="122" width="1" height="32" fill="#ff0000"/><rect x="389" y="122" width="3" height="20" fill="#ff0000"/><rect x="396" y="122" width="1" height="13" fill="#0000ff"/><rect x="395" y="122" width="3" height="7" fill="#0000ff"/><rect x="402" y="112" width="1" height="23" fill="#0000ff"/><rect x="401" y="129" width="3" height="1" fill="#0000ff"/><rect x="408" y="112" width="1" height="23" fill="#0000ff"/><rect x="407" y="125" width="3" height="1" fill="#0000ff"/><rect x="414" y="112" width="1" height="17" fill="#0000ff"/><rect x="413" y="120" width="3" height="1" fill="#0000ff"/><rect x="420" y="112" width="1" height="17" fill="#ff0000"/><rect x="419" y="122" width="3" height="7" fill="#ff0000"/><rect x="426" y="104" width="1" height="18" fill="#ff0000"/><rect x="425" y="104" width="3" height="18" fill="#ff0000"/><rect x="432" y="86" width="1" height="24" fill="#ff0000"/><rect x="431" y="92" width="3" height="12" fill="#ff0000"/><rect x="438" y="86" width="1" height="18" fill="#0000ff"/><rect x="437" y="86" width="3" height="18" fill="#0000ff"/><rect x="444" y="92" width="1" height="24" fill="#0000ff"/><rect x="443" y="104" width="3" height="1" fill="#0000ff"/><rect x="450" y="104" width="1" height="12" fill="#0000ff"/><rect x="449" y="104" width="3" height="2" fill="#0000ff"/><rect x="456" y="86" width="1" height="25" fill="#ff0000"/><rect x="455" y="86" width="3" height="23" fill="#ff0000"/><rect x="462" y="86" width="1" height="18" fill="#0000ff"/><rect x="461" y="92" width="3" height="7" fill="#0000ff"/><rect x="468" y="98" width="1" height="6" fill="#0000ff"/><rect x="467" y="98" width="3" height="6" fill="#0000ff"/><rect x="474" y="92" width="1" height="1" fill="#ff0000"/><rect x="473" y="92" width="3" height="1" fill="#ff0000"/><rect x="480" y="110" width="1" height="19" fill="#ff0000"/><rect x="479" y="110" width="3" height="19" fill="#ff0000"/><rect x="486" y="110" width="1" height="15" fill="#0000ff"/><rect x="485" y="110" width="3" height="12" fill="#0000ff"/><rect x="492" y="110" width="1" height="20" fill="#0000ff"/><rect x="491" y="116" width="3" height="1" fill="#0000ff"/><rect x="498" y="120" width="1" height="20" fill="#0000ff"/><rect x="497" y="120" width="3" height="10" fill="#0000ff"/><rect x="504" y="116" width="1" height="19" fill="#ff0000"/><rect x="503" y="116" width="3" height="14" fill="#ff0000"/><rect x="510" y="110" width="1" height="25" fill="#0000ff"/><rect x="509" y="116" width="3" height="1" fill="#0000ff"/><rect x="516" y="120" width="1" height="10" fill="#0000ff"/><rect x="515" y="120" width="3" height="1" fill="#0000ff"/><rect x="522" y="104" width="1" height="13" fill="#0000ff"/><rect x="521" y="110" width="3" height="1" fill="#0000ff"/><rect x="528" y="110" width="1" height="7" fill="#0000ff"/><rect x="527" y="110" width="3" height="1" fill="#0000ff"/><rect x="534" y="98" width="1" height="12" fill="#ff0000"/><rect x="533" y="98" width="3" height="12" fill="#ff0000"/><rect x="540" y="98" width="1" height="12" fill="#0000ff"/><rect x="539" y="98" width="3" height="6" fill="#0000ff"/><rect x="546" y="104" width="1" height="13" fill="#0000ff"/><rect x="545" y="104" width="3" height="11" fill="#0000ff"/><rect x="552" y="110" width="1" height="7" fill="#ff0000"/><rect x="551" y="110" width="3" height="7" fill="#ff0000"/><rect x="558" y="110" width="1" height="13" fill="#0000ff"/><rect x="557" y="111" width="3" height="5" fill="#0000ff"/><rect x="564" y="117" width="1" height="5" fill="#0000ff"/><rect x="563" y="117" width="3" height="5" fill="#0000ff"/><rect x="570" y="110" width="1" height="12" fill="#ff0000"/><rect x="569" y="114" width="3" height="8" fill="#ff0000"/><rect x="576" y="110" width="1" height="7" fill="#0000ff"/><rect x="575" y="110" width="3" height="7" fill="#0000ff"/><rect x="582" y="116" width="1" height="6" fill="#0000ff"/><rect x="581" y="116" width="3" height="1" fill="#0000ff"/><rect x="588" y="116" width="1" height="6" fill="#0000ff"/><rect x="587" y="116" width="3" height="1" fill="#0000ff"/><rect x="594" y="117" width="1" height="5" fill="#0000ff"/><rect x="593" y="117" width="3" height="5" fill="#0000ff"/><rect x="600" y="117" width="1" height="5" fill="#0000ff"/><rect x="599" y="117" width="3" height="5" fill="#0000ff"/><rect x="606" y="116" width="1" height="6" fill="#ff0000"/><rect x="605" y="116" width="3" height="6" fill="#ff0000"/><rect x="612" y="116" width="1" height="14" fill="#0000ff"/><rect x="611" y="120" width="3" height="1" fill="#0000ff"/><rect x="618" y="110" width="1" height="12" fill="#ff0000"/><rect x="617" y="116" width="3" height="6" fill="#ff0000"/><rect x="624" y="110" width="1" height="7" fill="#ff0000"/><rect x="623" y="110" width="3" height="7" fill="#ff0000"/><rect x="630" y="110" width="1" height="7" fill="#0000ff"/><rect x="629" y="110" width="3" height="1" fill="#0000ff"/><rect x="636" y="110" width="1" height="2" fill="#0000ff"/><rect x="635" y="110" width="3" height="1" fill="#0000ff"/><rect x="642" y="104" width="1" height="6" fill="#ff0000"/><rect x="641" y="104" width="3" height="6" fill="#ff0000"/><rect x="648" y="104" width="1" height="13" fill="#0000ff"/><rect x="647" y="104" width="3" height="13" fill="#0000ff"/><rect x="654" y="104" width="1" height="12" fill="#0000ff"/><rect x="653" y="111" width="3" height="5" fill="#0000ff"/><rect x="660" y="116" width="1" height="6" fill="#0000ff"/><rect x="659" y="116" width="3" height="1" fill="#0000ff"/><rect x="666" y="116" width="1" height="6" fill="#0000ff"/><rect x="665" y="116" width="3" height="6" fill="#0000ff"/><rect x="672" y="116" width="1" height="6" fill="#0000ff"/><rect x="671" y="122" width="3" height="1" fill="#0000ff"/><rect x="678" y="116" width="1" height="1" fill="#ff0000"/><rect x="677" y="116" width="3" height="1" fill="#ff0000"/><rect x="684" y="116" width="1" height="6" fill="#0000ff"/><rect x="683" y="122" width="3" height="1" fill="#0000ff"/><rect x="690" y="113" width="1" height="3" fill="#ff0000"/><rect x="689" y="113" width="3" height="2" fill="#ff0000"/><rect x="696" y="116" width="1" height="6" fill="#0000ff"/><rect x="695" y="118" width="3" height="1" fill="#0000ff"/><rect x="702" y="116" width="1" height="6" fill="#0000ff"/><rect x="701" y="118" width="3" height="1" fill="#0000ff"/><rect x="708" y="117" width="1" height="13" fill="#0000ff"/><rect x="707" y="117" width="3" height="13" fill="#0000ff"/><rect x="714" y="120" width="1" height="10" fill="#0000ff"/><rect x="713" y="120" width="3" height="10" fill="#0000ff"/><rect x="720" y="117" width="1" height="13" fill="#0000ff"/><rect x="719" y="125" width="3" height="1" fill="#0000ff"/><rect x="726" y="122" width="1" height="13" fill="#0000ff"/><rect x="725" y="128" width="3" height="1" fill="#0000ff"/><rect x="732" y="122" width="1" height="13" fill="#0000ff"/><rect x="731" y="128" width="3" height="1" fill="#0000ff"/><rect x="738" y="122" width="1" height="8" fill="#0000ff"/><rect x="737" y="124" width="3" height="1" fill="#0000ff"/><rect x="744" y="122" width="1" height="8" fill="#ff0000"/><rect x="743" y="122" width="3" height="8" fill="#ff0000"/><rect x="750" y="116" width="1" height="6" fill="#ff0000"/><rect x="749" y="116" width="3" height="6" fill="#ff0000"/><rect x="756" y="110" width="1" height="7" fill="#0000ff"/><rect x="755" y="116" width="3" height="1" fill="#0000ff"/><rect x="762" y="110" width="1" height="12" fill="#0000ff"/><rect x="761" y="110" width="3" height="12" fill="#0000ff"/><rect x="768" y="110" width="1" height="12" fill="#ff0000"/><rect x="767" y="117" width="3" height="4" fill="#ff0000"/><rect x="774" y="110" width="1" height="7" fill="#0000ff"/><rect x="773" y="116" width="3" height="1" fill="#0000ff"/><rect x="780" y="110" width="1" height="7" fill="#0000ff"/><rect x="779" y="116" width="3" height="1" fill="#0000ff"/><rect x="786" y="110" width="1" height="7" fill="#0000ff"/><rect x="785" y="116" width="3" height="1" fill="#0000ff"/><rect x="792" y="110" width="1" height="7" fill="#ff0000"/><rect x="791" y="110" width="3" height="1" fill="#ff0000"/><rect x="798" y="110" width="1" height="7" fill="#0000ff"/><rect x="797" y="110" width="3" height="1" fill="#0000ff"/><rect x="804" y="110" width="1" height="7" fill="#0000ff"/><rect x="803" y="110" width="3" height="1" fill="#0000ff"/><rect x="810" y="110" width="1" height="7" fill="#0000ff"/><rect x="809" y="110" width="3" height="1" fill="#0000ff"/><rect x="816" y="110" width="1" height="7" fill="#0000ff"/><rect x="815" y="110" width="3" height="1" fill="#0000ff"/><rect x="822" y="98" width="1" height="9" fill="#ff0000"/><rect x="821" y="98" width="3" height="9" fill="#ff0000"/><rect x="828" y="98" width="1" height="6" fill="#ff0000"/><rect x="827" y="98" width="3" height="6" fill="#ff0000"/><rect x="834" y="99" width="1" height="6" fill="#0000ff"/><rect x="833" y="99" width="3" height="1" fill="#0000ff"/><rect x="840" y="92" width="1" height="12" fill="#ff0000"/><rect x="839" y="99" width="3" height="5" fill="#ff0000"/><rect x="846" y="92" width="1" height="12" fill="#0000ff"/><rect x="845" y="98" width="3" height="1" fill="#0000ff"/><rect x="852" y="99" width="1" height="6" fill="#0000ff"/><rect x="851" y="99" width="3" height="1" fill="#0000ff"/><rect x="858" y="99" width="1" height="6" fill="#0000ff"/><rect x="857" y="104" width="3" height="1" fill="#0000ff"/><rect x="864" y="99" width="1" height="6" fill="#0000ff"/><rect x="863" y="104" width="3" height="1" fill="#0000ff"/><rect x="870" y="98" width="1" height="6" fill="#ff0000"/><rect x="869" y="98" width="3" height="6" fill="#ff0000"/><rect x="876" y="98" width="1" height="12" fill="#0000ff"/><rect x="875" y="98" width="3" height="6" fill="#0000ff"/><rect x="882" y="98" width="1" height="9" fill="#ff0000"/><rect x="881" y="98" width="3" height="6" fill="#ff0000"/><rect x="888" y="92" width="1" height="7" fill="#ff0000"/><rect x="887" y="92" width="3" height="1" fill="#ff0000"/><rect x="894" y="86" width="1" height="12" fill="#ff0000"/><rect x="893" y="86" width="3" height="12" fill="#ff0000"/><rect x="900" y="73" width="1" height="19" fill="#ff0000"/><rect x="899" y="80" width="3" height="6" fill="#ff0000"/><rect x="906" y="73" width="1" height="13" fill="#0000ff"/><rect x="905" y="80" width="3" height="6" fill="#0000ff"/><rect x="912" y="73" width="1" height="19" fill="#0000ff"/><rect x="911" y="80" width="3" height="12" fill="#0000ff"/><rect x="918" y="86" width="1" height="18" fill="#0000ff"/><rect x="917" y="92" width="3" height="5" fill="#0000ff"/><rect x="924" y="92" width="1" height="20" fill="#ff0000"/><rect x="923" y="92" width="3" height="5" fill="#ff0000"/><rect x="930" y="86" width="1" height="10" fill="#ff0000"/><rect x="929" y="86" width="3" height="10" fill="#ff0000"/><rect x="936" y="79" width="1" height="14" fill="#0000ff"/><rect x="935" y="86" width="3" height="7" fill="#0000ff"/><rect x="942" y="73" width="1" height="19" fill="#ff0000"/><rect x="941" y="79" width="3" height="13" fill="#ff0000"/><rect x="948" y="55" width="1" height="24" fill="#ff0000"/><rect x="947" y="62" width="3" height="17" fill="#ff0000"/><rect x="954" y="55" width="1" height="19" fill="#0000ff"/><rect x="953" y="62" width="3" height="6" fill="#0000ff"/><rect x="960" y="62" width="1" height="24" fill="#0000ff"/><rect x="959" y="67" width="3" height="1" fill="#0000ff"/><rect x="966" y="67" width="1" height="30" fill="#0000ff"/><rect x="965" y="74" width="3" height="23" fill="#0000ff"/><rect x="972" y="86" width="1" height="13" fill="#ff0000"/><rect x="971" y="86" width="3" height="13" fill="#ff0000"/><rect x="978" y="86" width="1" height="6" fill="#0000ff"/><rect x="977" y="86" width="3" height="6" fill="#0000ff"/><rect x="984" y="92" width="1" height="12" fill="#ff0000"/><rect x="983" y="92" width="3" height="7" fill="#ff0000"/><rect x="990" y="92" width="1" height="12" fill="#0000ff"/><rect x="989" y="98" width="3" height="1" fill="#0000ff"/><rect x="996" y="92" width="1" height="30" fill="#0000ff"/><rect x="995" y="99" width="3" height="18" fill="#0000ff"/><rect x="1002" y="104" width="1" height="19" fill="#ff0000"/><rect x="1001" y="104" width="3" height="11" fill="#ff0000"/><rect x="1008" y="97" width="1" height="19" fill="#0000ff"/><rect x="1007" y="110" width="3" height="6" fill="#0000ff"/><rect x="1014" y="104" width="1" height="19" fill="#ff0000"/><rect x="1013" y="104" width="3" height="11" fill="#ff0000"/><rect x="1020" y="98" width="1" height="6" fill="#ff0000"/><rect x="1019" y="98" width="3" height="6" fill="#ff0000"/><rect x="1026" y="92" width="1" height="13" fill="#0000ff"/><rect x="1025" y="98" width="3" height="1" fill="#0000ff"/><rect x="1032" y="92" width="1" height="13" fill="#ff0000"/><rect x="1031" y="92" width="3" height="13" fill="#ff0000"/><rect x="1038" y="92" width="1" height="6" fill="#0000ff"/><rect x="1037" y="92" width="3" height="2" fill="#0000ff"/><rect x="1044" y="98" width="1" height="7" fill="#0000ff"/><rect x="1043" y="98" width="3" height="7" fill="#0000ff"/><rect x="1050" y="92" width="1" height="13" fill="#ff0000"/><rect x="1049" y="92" width="3" height="13" fill="#ff0000"/><rect x="1056" y="92" width="1" height="13" fill="#0000ff"/><rect x="1055" y="92" width="3" height="6" fill="#0000ff"/><rect x="1062" y="86" width="1" height="19" fill="#0000ff"/><rect x="1061" y="98" width="3" height="7" fill="#0000ff"/><rect x="1068" y="92" width="1" height="13" fill="#ff0000"/><rect x="1067" y="95" width="3" height="1" fill="#ff0000"/><rect x="1074" y="98" width="1" height="7" fill="#0000ff"/><rect x="1073" y="98" width="3" height="7" fill="#0000ff"/><rect x="1080" y="95" width="1" height="10" fill="#ff0000"/><rect x="1079" y="98" width="3" height="1" fill="#ff0000"/><rect x="1086" y="94" width="1" height="11" fill="#ff0000"/><rect x="1085" y="94" width="3" height="11" fill="#ff0000"/></g>
<rect x="-1" y="333" width="3" height="1" fill="#008c00"/><rect x="5" y="331" width="3" height="3" fill="#008c00"/><rect x="11" y="332" width="3" height="2" fill="#008c00"/><rect x="17" y="332" width="3" height="2" fill="#008c00"/><rect x="23" y="332" width="3" height="2" fill="#008c00"/><rect x="29" y="302" width="3" height="32" fill="#008c00"/><rect x="35" y="301" width="3" height="33" fill="#008c00"/><rect x="41" y="268" width="3" height="66" fill="#008c00"/><rect x="47" y="313" width="3" height="21" fill="#008c00"/><rect x="53" y="315" width="3" height="19" fill="#008c00"/><rect x="59" y="325" width="3" height="9" fill="#008c00"/><rect x="65" y="324" width="3" height="10" fill="#008c00"/><rect x="71" y="316" width="3" height="18" fill="#008c00"/><rect x="77" y="326" width="3" height="8" fill="#008c00"/><rect x="83" y="325" width="3" height="9" fill="#008c00"/><rect x="89" y="324" width="3" height="10" fill="#008c00"/><rect x="95" y="322" width="3" height="12" fill="#008c00"/><rect x="101" y="325" width="3" height="9" fill="#008c00"/><rect x="107" y="310" width="3" height="24" fill="#008c00"/><rect x="113" y="323" width="3" height="11" fill="#008c00"/><rect x="119" y="327" width="3" height="7" fill="#008c00"/><rect x="125" y="327" width="3" height="7" fill="#008c00"/><rect x="131" y="327" width="3" height="7" fill="#008c00"/><rect x="137" y="327" width="3" height="7" fill="#008c00"/><rect x="143" y="329" width="3" height="5" fill="#008c00"/><rect x="149" y="328" width="3" height="6" fill="#008c00"/><rect x="155" y="330" width="3" height="4" fill="#008c00"/><rect x="161" y="328" width="3" height="6" fill="#008c00"/><rect x="167" y="328" width="3" height="6" fill="#008c00"/><rect x="173" y="332" width="3" height="2" fill="#008c00"/><rect x="179" y="330" width="3" height="4" fill="#008c00"/><rect x="185" y="332" width="3" height="2" fill="#008c00"/><rect x="191" y="332" width="3" height="2" fill="#008c00"/><rect x="197" y="332" width="3" height="2" fill="#008c00"/><rect x="203" y="330" width="3" height="4" fill="#008c00"/><rect x="209" y="331" width="3" height="3" fill="#008c00"/><rect x="221" y="333" width="3" height="1" fill="#008c00"/><rect x="227" y="333" width="3" height="1" fill="#008c00"/><rect x="233" y="333" width="3" height="1" fill="#008c00"/><rect x="239" y="333" width="3" height="1" fill="#008c00"/><rect x="245" y="333" width="3" height="1" fill="#008c00"/><rect x="251" y="333" width="3" height="1" fill="#008c00"/><rect x="257" y="330" width="3" height="4" fill="#008c00"/><rect x="263" y="333" width="3" height="1" fill="#008c00"/><rect x="269" y="332" width="3" height="2" fill="#008c00"/><rect x="275" y="328" width="3" height="6" fill="#008c00"/><rect x="281" y="316" width="3" height="18" fill="#008c00"/><rect x="287" y="327" width="3" height="7" fill="#008c00"/><rect x="293" y="330" width="3" height="4" fill="#008c00"/><rect x="299" y="329" width="3" height="5" fill="#008c00"/><rect x="305" y="306" width="3" height="28" fill="#008c00"/><rect x="311" y="328" width="3" height="6" fill="#008c00"/><rect x="317" y="328" width="3" height="6" fill="#008c00"/><rect x="323" y="325" width="3" height="9" fill="#008c00"/><rect x="329" y="331" width="3" height="3" fill="#008c00"/><rect x="335" y="331" width="3" height="3" fill="#008c00"/><rect x="341" y="324" width="3" height="10" fill="#008c00"/><rect x="347" y="327" width="3" height="7" fill="#008c00"/><rect x="353" y="323" width="3" height="11" fill="#008c00"/><rect x="359" y="321" width="3" height="13" fill="#008c00"/><rect x="365" y="329" width="3" height="5" fill="#008c00"/><rect x="371" y="330" width="3" height="4" fill="#008c00"/><rect x="377" y="326" width="3" height="8" fill="#008c00"/><rect x="383" y="330" width="3" height="4" fill="#008c00"/><rect x="389" y="330" width="3" height="4" fill="#008c00"/><rect x="395" y="330" width="3" height="4" fill="#008c00"/><rect x="401" y="326" width="3" height="8" fill="#008c00"/><rect x="407" y="330" width="3" height="4" fill="#008c00"/><rect x="413" y="329" width="3" height="5" fill="#008c00"/><rect x="419" y="332" width="3" height="2" fill="#008c00"/><rect x="425" y="323" width="3" height="11" fill="#008c00"/><rect x="431" y="324" width="3" height="10" fill="#008c00"/><rect x="437" y="326" width="3" height="8" fill="#008c00"/><rect x="443" y="326" width="3" height="8" fill="#008c00"/><rect x="449" y="327" width="3" height="7" fill="#008c00"/><rect x="455" y="323" width="3" height="11" fill="#008c00"/><rect x="461" y="326" width="3" height="8" fill="#008c00"/><rect x="467" y="329" width="3" height="5" fill="#008c00"/><rect x="473" y="325" width="3" height="9" fill="#008c00"/><rect x="479" y="328" width="3" height="6" fill="#008c00"/><rect x="485" y="330" width="3" height="4" fill="#008c00"/><rect x="491" y="331" width="3" height="3" fill="#008c00"/><rect x="497" y="332" width="3" height="2" fill="#008c00"/><rect x="503" y="330" width="3" height="4" fill="#008c00"/><rect x="509" y="333" width="3" height="1" fill="#008c00"/><rect x="515" y="333" width="3" height="1" fill="#008c00"/><rect x="521" y="330" width="3" height="4" fill="#008c00"/><rect x="527" y="332" width="3" height="2" fill="#008c00"/><rect x="533" y="332" width="3" height="2" fill="#008c00"/><rect x="539" y="330" width="3" height="4" fill="#008c00"/><rect x="545" y="332" width="3" height="2" fill="#008c00"/><rect x="557" y="333" width="3" height="1" fill="#008c00"/><rect x="563" y="333" width="3" height="1" fill="#008c00"/><rect x="569" y="332" width="3" height="2" fill="#008c00"/><rect x="575" y="333" width="3" height="1" fill="#008c00"/><rect x="581" y="333" width="3" height="1" fill="#008c00"/><rect x="587" y="333" width="3" height="1" fill="#008c00"/><rect x="593" y="333" width="3" height="1" fill="#008c00"/><rect x="599" y="333" width="3" height="1" fill="#008c00"/><rect x="611" y="331" width="3" height="3" fill="#008c00"/><rect x="617" y="333" width="3" height="1" fill="#008c00"/><rect x="623" y="333" width="3" height="1" fill="#008c00"/><rect x="629" y="333" width="3" height="1" fill="#008c00"/><rect x="635" y="333" width="3" height="1" fill="#008c00"/><rect x="641" y="333" width="3" height="1" fill="#008c00"/><rect x="647" y="333" width="3" height="1" fill="#008c00"/><rect x="653" y="331" width="3" height="3" fill="#008c00"/><rect x="659" y="333" width="3" height="1" fill="#008c00"/><rect x="665" y="333" width="3" height="1" fill="#008c00"/><rect x="677" y="333" width="3" height="1" fill="#008c00"/><rect x="683" y="333" width="3" height="1" fill="#008c00"/><rect x="707" y="332" width="3" height="2" fill="#008c00"/><rect x="713" y="333" width="3" height="1" fill="#008c00"/><rect x="719" y="333" width="3" height="1" fill="#008c00"/><rect x="725" y="331" width="3" height="3" fill="#008c00"/><rect x="731" y="332" width="3" height="2" fill="#008c00"/><rect x="737" y="333" width="3" height="1" fill="#008c00"/><rect x="743" y="333" width="3" height="1" fill="#008c00"/><rect x="749" y="332" width="3" height="2" fill="#008c00"/><rect x="755" y="333" width="3" height="1" fill="#008c00"/><rect x="761" y="332" width="3" height="2" fill="#008c00"/><rect x="767" y="332" width="3" height="2" fill="#008c00"/><rect x="773" y="333" width="3" height="1" fill="#008c00"/><rect x="779" y="333" width="3" height="1" fill="#008c00"/><rect x="785" y="333" width="3" height="1" fill="#008c00"/><rect x="791" y="333" width="3" height="1" fill="#008c00"/><rect x="797" y="332" width="3" height="2" fill="#008c00"/><rect x="803" y="333" width="3" height="1" fill="#008c00"/><rect x="815" y="333" width="3" height="1" fill="#008c00"/><rect x="821" y="331" width="3" height="3" fill="#008c00"/><rect x="827" y="333" width="3" height="1" fill="#008c00"/><rect x="833" y="333" width="3" height="1" fill="#008c00"/><rect x="839" y="332" width="3" height="2" fill="#008c00"/><rect x="845" y="333" width="3" height="1" fill="#008c00"/><rect x="857" y="333" width="3" height="1" fill="#008c00"/><rect x="863" y="333" width="3" height="1" fill="#008c00"/><rect x="869" y="333" width="3" height="1" fill="#008c00"/><rect x="875" y="333" width="3" height="1" fill="#008c00"/><rect x="881" y="332" width="3" height="2" fill="#008c00"/><rect x="887" y="333" width="3" height="1" fill="#008c00"/><rect x="893" y="333" width="3" height="1" fill="#008c00"/><rect x="899" y="330" width="3" height="4" fill="#008c00"/><rect x="905" y="332" width="3" height="2" fill="#008c00"/><rect x="911" y="329" width="3" height="5" fill="#008c00"/><rect x="917" y="329" width="3" height="5" fill="#008c00"/><rect x="923" y="329" width="3" height="5" fill="#008c00"/><rect x="929" y="330" width="3" height="4" fill="#008c00"/><rect x="935" y="332" width="3" height="2" fill="#008c00"/><rect x="941" y="331" width="3" height="3" fill="#008c00"/><rect x="947" y="325" width="3" height="9" fill="#008c00"/><rect x="953" y="329" width="3" height="5" fill="#008c00"/><rect x="959" y="329" width="3" height="5" fill="#008c00"/><rect x="965" y="328" width="3" height="6" fill="#008c00"/><rect x="971" y="332" width="3" height="2" fill="#008c00"/><rect x="977" y="332" width="3" height="2" fill="#008c00"/><rect x="983" y="332" width="3" height="2" fill="#008c00"/><rect x="989" y="331" width="3" height="3" fill="#008c00"/><rect x="995" y="329" width="3" height="5" fill="#008c00"/><rect x="1001" y="332" width="3" height="2" fill="#008c00"/><rect x="1007" y="325" width="3" height="9" fill="#008c00"/><rect x="1013" y="330" width="3" height="4" fill="#008c00"/><rect x="1019" y="332" width="3" height="2" fill="#008c00"/><rect x="1025" y="330" width="3" height="4" fill="#008c00"/><rect x="1031" y="331" width="3" height="3" fill="#008c00"/><rect x="1037" y="333" width="3" height="1" fill="#008c00"/><rect x="1043" y="332" width="3" height="2" fill="#008c00"/><rect x="1049" y="332" width="3" height="2" fill="#008c00"/><rect x="1055" y="332" width="3" height="2" fill="#008c00"/><rect x="1061" y="332" width="3" height="2" fill="#008c00"/><rect x="1067" y="333" width="3" height="1" fill="#008c00"/><rect x="1073" y="333" width="3" height="1" fill="#008c00"/><rect x="1079" y="333" width="3" height="1" fill="#008c00"/><rect x="1085" y="332" width="3" height="2" fill="#008c00"/>
<rect x="0" y="410" width="1087" height="1" fill="#808080"/><rect x="36" y="408" width="1" height="2" fill="#ff0000"/><rect x="42" y="401" width="1" height="9" fill="#ff0000"/><rect x="48" y="396" width="1" height="14" fill="#ff0000"/><rect x="54" y="396" width="1" height="14" fill="#ff0000"/><rect x="60" y="396" width="1" height="14" fill="#ff0000"/><rect x="66" y="400" width="1" height="10" fill="#ff0000"/><rect x="72" y="403" width="1" height="7" fill="#ff0000"/><rect x="78" y="405" width="1" height="5" fill="#ff0000"/><rect x="84" y="407" width="1" height="3" fill="#ff0000"/><rect x="90" y="409" width="1" height="1" fill="#ff0000"/><rect x="96" y="411" width="1" height="0" fill="#ff0000"/><rect x="102" y="411" width="1" height="3" fill="#ff0000"/><rect x="108" y="411" width="1" height="6" fill="#ff0000"/><rect x="114" y="411" width="1" height="7" fill="#ff0000"/><rect x="120" y="411" width="1" height="8" fill="#ff0000"/><rect x="126" y="411" width="1" height="8" fill="#ff0000"/><rect x="132" y="411" width="1" height="9" fill="#ff0000"/><rect x="138" y="411" width="1" height="10" fill="#ff0000"/><rect x="144" y="411" width="1" height="10" fill="#ff0000"/><rect x="150" y="411" width="1" height="11" fill="#ff0000"/><rect x="156" y="411" width="1" height="11" fill="#ff0000"/><rect x="162" y="411" width="1" height="10" fill="#ff0000"/><rect x="168" y="411" width="1" height="8" fill="#ff0000"/><rect x="174" y="411" width="1" height="6" fill="#ff0000"/><rect x="180" y="411" width="1" height="5" fill="#ff0000"/><rect x="186" y="411" width="1" height="5" fill="#ff0000"/><rect x="192" y="411" width="1" height="4" fill="#ff0000"/><rect x="198" y="411" width="1" height="4" fill="#ff0000"/><rect x="204" y="411" width="1" height="4" fill="#ff0000"/><rect x="210" y="411" width="1" height="4" fill="#ff0000"/><rect x="216" y="411" width="1" height="4" fill="#ff0000"/><rect x="222" y="411" width="1" height="4" fill="#ff0000"/><rect x="228" y="411" width="1" height="4" fill="#ff0000"/><rect x="234" y="411" width="1" height="4" fill="#ff0000"/><rect x="240" y="411" width="1" height="3" fill="#ff0000"/><rect x="246" y="411" width="1" height="2" fill="#ff0000"/><rect x="252" y="411" width="1" height="1" fill="#ff0000"/><rect x="258" y="411" width="1" height="1" fill="#ff0000"/><rect x="264" y="411" width="1" height="1" fill="#ff0000"/><rect x="270" y="411" width="1" height="1" fill="#ff0000"/><rect x="306" y="411" width="1" height="6" fill="#ff0000"/><rect x="312" y="411" width="1" height="9" fill="#ff0000"/><rect x="318" y="411" width="1" height="10" fill="#ff0000"/><rect x="324" y="411" width="1" height="11" fill="#ff0000"/><rect x="330" y="411" width="1" height="10" fill="#ff0000"/><rect x="336" y="411" width="1" height="8" fill="#ff0000"/><rect x="342" y="411" width="1" height="4" fill="#ff0000"/><rect x="348" y="411" width="1" height="1" fill="#ff0000"/><rect x="354" y="407" width="1" height="3" fill="#ff0000"/><rect x="360" y="406" width="1" height="4" fill="#ff0000"/><rect x="366" y="407" width="1" height="3" fill="#ff0000"/><rect x="372" y="407" width="1" height="3" fill="#ff0000"/><rect x="378" y="407" width="1" height="3" fill="#ff0000"/><rect x="384" y="408" width="1" height="2" fill="#ff0000"/><rect x="390" y="407" width="1" height="3" fill="#ff0000"/><rect x="396" y="407" width="1" height="3" fill="#ff0000"/><rect x="402" y="407" width="1" height="3" fill="#ff0000"/><rect x="408" y="407" width="1" height="3" fill="#ff0000"/><rect x="414" y="408" width="1" height="2" fill="#ff0000"/><rect x="420" y="407" width="1" height="3" fill="#ff0000"/><rect x="426" y="406" width="1" height="4" fill="#ff0000"/><rect x="432" y="404" width="1" height="6" fill="#ff0000"/><rect x="438" y="404" width="1" height="6" fill="#ff0000"/><rect x="444" y="405" width="1" height="5" fill="#ff0000"/><rect x="450" y="405" width="1" height="5" fill="#ff0000"/><rect x="456" y="404" width="1" height="6" fill="#ff0000"/><rect x="462" y="405" width="1" height="5" fill="#ff0000"/><rect x="468" y="407" width="1" height="3" fill="#ff0000"/><rect x="474" y="407" width="1" height="3" fill="#ff0000"/><rect x="492" y="411" width="1" height="3" fill="#ff0000"/><rect x="498" y="411" width="1" height="5" fill="#ff0000"/><rect x="504" y="411" width="1" height="5" fill="#ff0000"/><rect x="510" y="411" width="1" height="4" fill="#ff0000"/><rect x="516" y="411" width="1" height="3" fill="#ff0000"/><rect x="522" y="411" width="1" height="3" fill="#ff0000"/><rect x="528" y="411" width="1" height="2" fill="#ff0000"/><rect x="558" y="411" width="1" height="2" fill="#ff0000"/><rect x="564" y="411" width="1" height="3" fill="#ff0000"/><rect x="570" y="411" width="1" height="3" fill="#ff0000"/><rect x="576" y="411" width="1" height="3" fill="#ff0000"/><rect x="582" y="411" width="1" height="3" fill="#ff0000"/><rect x="588" y="411" width="1" height="2" fill="#ff0000"/><rect x="594" y="411" width="1" height="3" fill="#ff0000"/><rect x="600" y="411" width="1" height="3" fill="#ff0000"/><rect x="606" y="411" width="1" height="2" fill="#ff0000"/><rect x="612" y="411" width="1" height="2" fill="#ff0000"/><rect x="618" y="411" width="1" height="1" fill="#ff0000"/><rect x="672" y="411" width="1" height="2" fill="#ff0000"/><rect x="708" y="411" width="1" height="2" fill="#ff0000"/><rect x="714" y="411" width="1" height="2" fill="#ff0000"/><rect x="720" y="411" width="1" height="3" fill="#ff0000"/><rect x="726" y="411" width="1" height="3" fill="#ff0000"/><rect x="732" y="411" width="1" height="2" fill="#ff0000"/><rect x="738" y="411" width="1" height="2" fill="#ff0000"/><rect x="822" y="408" width="1" height="2" fill="#ff0000"/><rect x="828" y="408" width="1" height="2" fill="#ff0000"/><rect x="834" y="408" width="1" height="2" fill="#ff0000"/><rect x="840" y="408" width="1" height="2" fill="#ff0000"/><rect x="846" y="408" width="1" height="2" fill="#ff0000"/><rect x="852" y="409" width="1" height="1" fill="#ff0000"/><rect x="900" y="409" width="1" height="1" fill="#ff0000"/><rect x="906" y="409" width="1" height="1" fill="#ff0000"/><rect x="948" y="409" width="1" height="1" fill="#ff0000"/><rect x="954" y="408" width="1" height="2" fill="#ff0000"/><rect x="960" y="408" width="1" height="2" fill="#ff0000"/><rect x="978" y="411" width="1" height="2" fill="#ff0000"/><rect x="984" y="411" width="1" height="3" fill="#ff0000"/><rect x="990" y="411" width="1" height="3" fill="#ff0000"/><rect x="996" y="411" width="1" height="7" fill="#ff0000"/><rect x="1002" y="411" width="1" height="7" fill="#ff0000"/><rect x="1008" y="411" width="1" height="8" fill="#ff0000"/><rect x="1014" y="411" width="1" height="7" fill="#ff0000"/><rect x="1020" y="411" width="1" height="5" fill="#ff0000"/><rect x="1026" y="411" width="1" height="4" fill="#ff0000"/><rect x="1032" y="411" width="1" height="2" fill="#ff0000"/><rect x="276" y="411" width="1" height="1" fill="#ff0000"/><rect x="282" y="411" width="1" height="1" fill="#ff0000"/><rect x="288" y="411" width="1" height="1" fill="#ff0000"/><rect x="294" y="411" width="1" height="1" fill="#ff0000"/><rect x="300" y="411" width="1" height="1" fill="#ff0000"/><rect x="480" y="409" width="1" height="1" fill="#ff0000"/><rect x="486" y="411" width="1" height="1" fill="#ff0000"/><rect x="534" y="411" width="1" height="1" fill="#ff0000"/><rect x="540" y="411" width="1" height="1" fill="#ff0000"/><rect x="546" y="411" width="1" height="1" fill="#ff0000"/><rect x="552" y="411" width="1" height="1" fill="#ff0000"/><rect x="624" y="411" width="1" height="1" fill="#ff0000"/><rect x="630" y="411" width="1" height="1" fill="#ff0000"/><rect x="636" y="411" width="1" height="1" fill="#ff0000"/><rect x="642" y="411" width="1" height="1" fill="#ff0000"/><rect x="648" y="411" width="1" height="1" fill="#ff0000"/><rect x="654" y="411" width="1" height="1" fill="#ff0000"/><rect x="660" y="411" width="1" height="1" fill="#ff0000"/><rect x="666" y="411" width="1" height="1" fill="#ff0000"/><rect x="678" y="411" width="1" height="1" fill="#ff0000"/><rect x="684" y="411" width="1" height="1" fill="#ff0000"/><rect x="690" y="411" width="1" height="1" fill="#ff0000"/><rect x="696" y="411" width="1" height="1" fill="#ff0000"/><rect x="702" y="411" width="1" height="1" fill="#ff0000"/><rect x="744" y="411" width="1" height="1" fill="#ff0000"/><rect x="750" y="411" width="1" height="1" fill="#ff0000"/><rect x="756" y="411" width="1" height="1" fill="#ff0000"/><rect x="762" y="411" width="1" height="1" fill="#ff0000"/><rect x="768" y="411" width="1" height="1" fill="#ff0000"/><rect x="774" y="411" width="1" height="1" fill="#ff0000"/><rect x="780" y="411" width="1" height="1" fill="#ff0000"/><rect x="786" y="409" width="1" height="1" fill="#ff0000"/><rect x="792" y="409" width="1" height="1" fill="#ff0000"/><rect x="798" y="409" width="1" height="1" fill="#ff0000"/><rect x="804" y="409" width="1" height="1" fill="#ff0000"/><rect x="810" y="409" width="1" height="1" fill="#ff0000"/><rect x="816" y="409" width="1" height="1" fill="#ff0000"/><rect x="858" y="409" width="1" height="1" fill="#ff0000"/><rect x="864" y="409" width="1" height="1" fill="#ff0000"/><rect x="870" y="409" width="1" height="1" fill="#ff0000"/><rect x="876" y="409" width="1" height="1" fill="#ff0000"/><rect x="882" y="409" width="1" height="1" fill="#ff0000"/><rect x="888" y="409" width="1" height="1" fill="#ff0000"/><rect x="894" y="409" width="1" height="1" fill="#ff0000"/><rect x="912" y="409" width="1" height="1" fill="#ff0000"/><rect x="918" y="409" width="1" height="1" fill="#ff0000"/><rect x="924" y="409" width="1" height="1" fill="#ff0000"/><rect x="930" y="409" width="1" height="1" fill="#ff0000"/><rect x="936" y="409" width="1" height="1" fill="#ff0000"/><rect x="942" y="409" width="1" height="1" fill="#ff0000"/><rect x="966" y="409" width="1" height="1" fill="#ff0000"/><rect x="972" y="411" width="1" height="1" fill="#ff0000"/><rect x="1038" y="411" width="1" height="1" fill="#ff0000"/><rect x="1044" y="411" width="1" height="1" fill="#ff0000"/><rect x="1050" y="411" width="1" height="1" fill="#ff0000"/><rect x="1056" y="411" width="1" height="1" fill="#ff0000"/><rect x="1062" y="411" width="1" height="1" fill="#ff0000"/><rect x="1068" y="411" width="1" height="1" fill="#ff0000"/><rect x="1074" y="411" width="1" height="1" fill="#ff0000"/><rect x="1080" y="411" width="1" height="1" fill="#ff0000"/><rect x="1086" y="411" width="1" height="1" fill="#ff0000"/><polyline points="27.0,395.6 36.6,392.0 48.3,373.0 61.5,366.4 68.8,367.0 82.0,369.3 93.7,372.0 108.0,379.5 123.0,386.9 139.0,396.4 150.8,402.2 159.6,405.0 174.0,404.0 186.0,406.2 200.0,407.3 209.6,408.4 231.6,410.3 250.6,411.7 269.7,413.2 277.0,410.7 294.6,409.5 303.3,412.5 312.0,420.5 323.8,427.8 332.6,431.2 340.0,430.8 350.2,425.6 359.0,418.3 370.7,416.6 385.3,414.7 395.0,412.2 415.0,409.8 429.6,403.0 437.0,400.5 456.0,395.6 466.2,395.6 472.0,396.0 480.8,397.5 495.5,403.0 501.3,405.9 524.8,405.9 539.4,405.1 554.0,405.1 568.7,408.8 583.3,409.8 593.0,410.3 598.3,412.5 614.4,412.5 616.0,411.4 626.0,411.4 633.5,409.5 640.8,408.5 645.0,408.5 646.6,409.2 657.0,409.2 664.2,411.4 670.0,412.5 680.3,412.5 681.8,411.4 703.7,411.4 706.7,413.2 712.5,414.2 718.4,415.4 730.0,415.4 733.0,416.6 740.3,416.6 744.7,415.4 753.5,413.5 765.2,412.5 777.0,411.4 787.2,410.3 791.0,409.2 794.9,408.4 806.6,407.3 818.3,405.4 828.5,404.4 837.3,402.5 862.2,402.5 866.6,403.4 884.2,402.5 897.3,400.5 901.7,399.3 910.5,399.3 914.9,400.5 935.4,402.2 944.2,400.7 950.0,397.5 958.5,395.2 966.6,398.6 972.5,400.7 982.7,403.0 990.0,405.1 997.3,409.5 1006.0,412.8 1015.0,414.2 1023.7,413.2 1032.5,411.7 1038.3,411.0 1045.7,412.5 1061.8,412.5 1073.5,413.5 1086.0,411.7" fill="none" stroke="#ffff00" stroke-width="1.3" stroke-linejoin="round" /><polyline points="0.0,396.4 30.7,396.0 36.6,395.6 42.5,393.4 49.8,387.6 60.0,381.7 71.7,376.6 82.0,374.4 89.3,373.4 96.6,373.4 105.4,374.4 117.0,378.0 128.8,381.7 139.0,385.4 150.8,390.5 158.0,394.0 174.0,399.3 189.0,402.2 200.0,403.7 209.6,405.1 224.3,407.8 239.0,409.2 253.6,410.3 268.2,411.0 297.5,411.3 303.3,411.7 312.0,414.7 326.8,421.2 340.0,425.2 348.7,425.3 363.4,423.0 378.0,419.8 395.0,416.1 407.6,414.7 429.6,411.0 444.2,405.9 458.9,401.9 473.5,399.3 480.8,398.1 495.5,400.0 510.0,402.5 521.8,404.4 554.0,404.8 568.7,406.9 589.2,408.4 593.0,409.5 604.0,409.2 605.6,410.3 681.8,410.3 683.2,411.3 711.0,411.3 712.5,412.5 722.8,412.5 724.2,413.5 736.0,413.5 737.4,414.4 765.2,414.4 766.7,413.5 777.0,413.5 778.4,412.5 788.7,412.5 791.0,411.3 800.7,411.3 802.2,410.3 812.4,410.3 813.9,409.2 818.3,408.4 825.6,407.3 831.5,406.3 843.2,405.4 849.0,404.4 866.6,403.4 895.9,403.4 900.3,402.2 904.7,401.2 944.2,401.2 945.7,400.3 955.9,400.3 957.4,399.3 980.8,399.3 985.6,400.3 991.5,401.5 997.3,403.4 1006.0,405.1 1015.0,408.4 1023.7,410.3 1041.3,411.3 1070.6,411.3 1072.0,412.5 1086.0,412.5" fill="none" stroke="#0000ff" stroke-width="1.3" stroke-linejoin="round" />
<g clip-path="url(#cp)"><rect x="0" y="477" width="1087" height="1" fill="#0000ff"/><rect x="0" y="519" width="1087" height="1" fill="#ff0000"/><polyline points="0.0,522.7 8.8,522.0 29.3,519.0 35.9,514.7 43.9,498.6 51.2,484.0 58.6,471.5 67.3,465.6 71.7,467.0 79.0,471.9 90.8,474.8 102.5,477.3 117.1,484.2 127.4,486.9 136.2,489.8 145.0,491.0 155.2,497.1 164.0,496.4 175.7,494.9 188.9,491.0 195.0,490.1 209.6,493.8 224.3,495.7 237.5,495.7 250.6,497.5 274.0,497.5 282.8,494.5 288.7,492.3 300.4,494.2 326.8,526.7 335.6,526.0 347.3,520.2 356.0,509.9 364.8,505.0 376.6,502.6 385.3,507.0 395.0,505.5 407.6,503.3 419.4,501.1 436.9,490.1 456.0,483.6 467.7,484.3 477.9,482.1 489.6,488.7 504.3,497.5 513.0,497.5 533.6,490.1 540.9,488.7 555.5,488.7 570.2,494.2 593.0,495.3 598.3,496.4 618.8,496.4 629.0,493.4 642.2,490.1 652.5,490.9 671.5,496.3 690.6,496.3 700.8,494.5 711.0,497.2 731.6,502.1 738.9,502.1 752.0,499.7 774.0,496.0 791.0,494.2 818.3,489.4 844.6,483.6 854.9,483.6 876.8,485.5 884.2,485.5 894.4,481.4 914.9,477.0 926.6,477.3 935.9,479.2 943.2,477.0 950.5,471.8 960.7,467.4 971.0,468.9 979.8,473.3 988.6,479.9 1006.1,485.7 1014.9,489.4 1020.8,489.4 1035.4,482.8 1047.1,481.4 1055.9,481.4 1064.7,484.0 1085.2,484.3" fill="none" stroke="#ff0000" stroke-width="1.2" stroke-linejoin="round" /><polyline points="0.0,490.5 11.7,492.7 23.4,489.0 33.7,482.5 46.9,475.9 55.6,474.4 61.5,476.3 76.1,484.7 90.8,487.1 102.5,488.3 111.3,494.2 123.0,503.7 133.2,512.8 143.5,517.6 156.7,521.3 166.9,516.9 181.6,501.5 190.3,496.4 195.0,495.7 217.0,496.7 233.0,496.7 246.2,496.0 265.3,511.4 269.7,512.1 285.8,493.8 294.6,493.8 315.0,515.0 323.8,526.7 329.7,530.4 338.5,525.3 347.3,515.0 356.0,500.4 364.8,491.6 376.6,494.2 385.3,496.7 395.0,494.5 401.8,491.9 420.8,490.9 428.1,488.0 436.9,479.2 448.6,479.2 466.2,475.5 473.5,475.5 480.8,481.4 488.2,489.4 498.4,508.4 510.1,513.3 518.9,507.7 532.1,498.9 542.3,492.3 555.5,493.4 571.6,501.1 583.3,501.9 593.0,509.9 601.2,519.4 607.1,523.1 614.4,519.4 626.1,504.8 634.9,485.7 642.2,473.3 648.1,474.0 655.4,481.4 664.2,494.5 675.9,506.2 684.7,505.5 692.0,501.9 702.3,504.5 719.8,526.7 731.6,526.0 741.8,519.4 755.0,493.1 762.3,487.5 774.0,486.5 789.0,480.2 803.6,468.9 818.3,465.0 834.4,464.5 847.6,469.6 865.3,485.7 876.8,490.9 888.6,485.5 900.3,473.3 906.1,473.7 914.9,482.1 925.2,496.7 935.9,496.3 944.6,488.7 957.8,479.9 960.7,479.9 978.3,501.1 994.4,511.4 1009.1,519.4 1017.8,519.4 1032.5,509.9 1041.3,505.5 1055.9,495.3 1063.2,491.3 1073.5,492.3 1085.2,489.4" fill="none" stroke="#ff0000" stroke-width="1.2" stroke-linejoin="round" /><polyline points="0.0,491.2 11.7,493.0 20.5,486.9 30.7,479.2 39.5,475.9 48.3,471.5 55.6,475.9 67.3,483.9 79.0,486.6 87.8,486.1 99.6,489.5 105.4,491.2 120.0,507.3 127.4,511.7 133.2,518.8 139.1,519.8 145.0,517.6 150.8,522.7 156.7,524.6 164.0,516.1 175.7,500.0 183.0,497.1 193.3,494.5 195.0,496.3 208.2,497.8 217.0,498.2 222.8,493.4 230.1,495.3 234.5,496.7 240.4,492.3 246.2,494.5 251.4,505.5 260.9,511.4 265.3,513.3 270.4,511.8 276.3,488.4 282.8,490.9 287.2,498.2 294.6,494.5 306.3,520.6 323.8,530.0 337.0,522.3 342.9,511.4 348.7,506.2 354.6,488.4 360.4,489.4 366.3,495.3 376.6,496.0 383.9,498.2 391.2,492.3 393.0,491.3 412.0,491.3 415.0,492.3 420.0,490.4 425.2,482.8 432.5,475.5 438.4,478.4 450.1,482.1 456.7,473.3 461.8,474.0 469.1,477.7 474.3,475.5 486.7,501.9 498.4,517.2 504.3,512.1 510.1,510.6 518.9,501.9 529.2,500.1 534.3,490.4 539.4,490.1 551.1,492.8 558.4,496.0 565.0,503.0 573.1,500.4 581.9,501.9 589.2,509.9 591.0,515.0 599.8,526.7 607.1,521.6 613.0,513.6 618.8,510.6 624.7,496.0 632.0,477.0 636.4,471.1 642.2,467.4 646.6,476.2 651.0,485.7 659.8,494.5 667.1,505.5 672.3,510.6 678.8,504.8 690.6,500.4 702.3,508.4 708.1,521.6 719.8,530.0 727.2,524.5 738.9,519.4 744.7,507.0 749.9,486.5 756.4,484.3 762.3,490.9 772.6,483.6 778.4,482.5 787.2,482.1 791.0,476.7 797.8,468.9 803.6,466.4 815.4,464.5 834.4,464.5 840.2,470.4 850.5,475.5 857.8,488.0 864.4,493.4 870.3,487.5 876.8,493.4 882.7,488.0 888.6,476.2 894.4,469.3 900.3,472.3 906.1,478.4 913.5,490.1 918.6,500.4 925.2,498.6 931.0,493.4 936.9,496.3 942.7,485.7 948.6,478.1 960.0,479.6 965.9,497.5 972.5,500.4 979.8,505.5 988.6,511.4 996.6,520.2 1001.7,517.2 1009.1,522.0 1020.8,512.8 1026.6,510.6 1038.3,502.6 1044.2,506.2 1050.8,490.9 1055.9,489.4 1062.5,494.2 1068.4,490.4 1075.0,493.8 1080.8,491.6 1085.2,485.0" fill="none" stroke="#0000ff" stroke-width="1.2" stroke-linejoin="round" /></g>
<text transform="translate(4,31.5) scale(0.81,1)" x="33.33 40.74 48.15 70.37 92.59 100.00 114.81 122.22 144.44 181.48 188.89 196.30 203.70 218.52 225.93 240.74 248.15 277.78 285.19 292.59 300.00 314.81 322.22 337.04 344.44" y="0" font-size="12" text-anchor="middle" fill="#000" font-family='"Liberation Sans", sans-serif'>225n131252013101820131022</text><text transform="translate(4,31.5) scale(0.54,1)" x="83.33" y="0" font-size="12" text-anchor="middle" fill="#000" font-family='"Liberation Sans", sans-serif'>m</text><text transform="translate(4,31.5) scale(0.82,1)" x="62.20 76.83 106.10 128.05 164.63 208.54 230.49 259.76 303.66 325.61 354.88" y="0" font-size="12" text-anchor="middle" fill="#000" font-family='"Liberation Sans", sans-serif'>ii/(,//-//)</text><text transform="translate(4,31.5)" x="6.00 18.00 126.00" y="0" font-size="11.5" text-anchor="middle" fill="#000" font-family='"Liberation Sans", sans-serif'>日経分</text><text transform="translate(318,31.5) scale(0.82,1)" x="76.83 98.78 128.05 164.63" y="0" font-size="12" text-anchor="middle" fill="#000" font-family='"Liberation Sans", sans-serif'>(,,)</text><text transform="translate(318,31.5) scale(0.81,1)" x="92.59 114.81 122.22 144.44 151.85" y="0" font-size="12" text-anchor="middle" fill="#000" font-family='"Liberation Sans", sans-serif'>92652</text><text transform="translate(318,31.5)" x="6.00 18.00 30.00 42.00 54.00" y="0" font-size="11.5" text-anchor="middle" fill="#000" font-family='"Liberation Sans", sans-serif'>一目均衡表</text><text transform="translate(476,31.5) scale(0.82,1)" x="62.20 84.15 98.78 113.41 150.00" y="0" font-size="12" text-anchor="middle" fill="#000" font-family='"Liberation Sans", sans-serif'>(ls,)</text><text transform="translate(476,31.5) scale(0.62,1)" x="101.61" y="0" font-size="12" text-anchor="middle" fill="#000" font-family='"Liberation Sans", sans-serif'>C</text><text transform="translate(476,31.5) scale(0.81,1)" x="92.59 107.41 129.63 137.04" y="0" font-size="12" text-anchor="middle" fill="#000" font-family='"Liberation Sans", sans-serif'>oe75</text><text transform="translate(476,31.5)" x="6.00 18.00 30.00 42.00" y="0" font-size="11.5" text-anchor="middle" fill="#000" font-family='"Liberation Sans", sans-serif'>移動平均</text><text transform="translate(622,31.5) scale(0.82,1)" x="62.20 84.15 98.78 113.41 157.32" y="0" font-size="12" text-anchor="middle" fill="#000" font-family='"Liberation Sans", sans-serif'>(ls,)</text><text transform="translate(622,31.5) scale(0.62,1)" x="101.61" y="0" font-size="12" text-anchor="middle" fill="#000" font-family='"Liberation Sans", sans-serif'>C</text><text transform="translate(622,31.5) scale(0.81,1)" x="92.59 107.41 129.63 137.04 144.44" y="0" font-size="12" text-anchor="middle" fill="#000" font-family='"Liberation Sans", sans-serif'>oe150</text><text transform="translate(622,31.5)" x="6.00 18.00 30.00 42.00" y="0" font-size="11.5" text-anchor="middle" fill="#000" font-family='"Liberation Sans", sans-serif'>移動平均</text><text transform="translate(774,31.5) scale(0.82,1)" x="62.20 84.15 98.78 113.41 157.32" y="0" font-size="12" text-anchor="middle" fill="#000" font-family='"Liberation Sans", sans-serif'>(ls,)</text><text transform="translate(774,31.5) scale(0.62,1)" x="101.61" y="0" font-size="12" text-anchor="middle" fill="#000" font-family='"Liberation Sans", sans-serif'>C</text><text transform="translate(774,31.5) scale(0.81,1)" x="92.59 107.41 129.63 137.04 144.44" y="0" font-size="12" text-anchor="middle" fill="#000" font-family='"Liberation Sans", sans-serif'>oe100</text><text transform="translate(774,31.5)" x="6.00 18.00 30.00 42.00" y="0" font-size="11.5" text-anchor="middle" fill="#000" font-family='"Liberation Sans", sans-serif'>移動平均</text><text transform="translate(926,31.5) scale(0.82,1)" x="62.20 84.15 98.78 113.41 150.00" y="0" font-size="12" text-anchor="middle" fill="#000" font-family='"Liberation Sans", sans-serif'>(ls,)</text><text transform="translate(926,31.5) scale(0.62,1)" x="101.61" y="0" font-size="12" text-anchor="middle" fill="#000" font-family='"Liberation Sans", sans-serif'>C</text><text transform="translate(926,31.5) scale(0.81,1)" x="92.59 107.41 129.63 137.04" y="0" font-size="12" text-anchor="middle" fill="#000" font-family='"Liberation Sans", sans-serif'>oe75</text><text transform="translate(926,31.5)" x="6.00 18.00 30.00 42.00" y="0" font-size="11.5" text-anchor="middle" fill="#000" font-family='"Liberation Sans", sans-serif'>移動平均</text><text transform="translate(4,45.5) scale(0.82,1)" x="62.20 84.15 98.78 113.41 150.00" y="0" font-size="12" text-anchor="middle" fill="#000" font-family='"Liberation Sans", sans-serif'>(ls,)</text><text transform="translate(4,45.5) scale(0.62,1)" x="101.61" y="0" font-size="12" text-anchor="middle" fill="#000" font-family='"Liberation Sans", sans-serif'>C</text><text transform="translate(4,45.5) scale(0.81,1)" x="92.59 107.41 129.63 137.04" y="0" font-size="12" text-anchor="middle" fill="#000" font-family='"Liberation Sans", sans-serif'>oe10</text><text transform="translate(4,45.5)" x="6.00 18.00 30.00 42.00" y="0" font-size="11.5" text-anchor="middle" fill="#000" font-family='"Liberation Sans", sans-serif'>移動平均</text><text transform="translate(150,45.5) scale(0.82,1)" x="62.20 84.15 98.78 113.41 157.32" y="0" font-size="12" text-anchor="middle" fill="#000" font-family='"Liberation Sans", sans-serif'>(ls,)</text><text transform="translate(150,45.5) scale(0.62,1)" x="101.61" y="0" font-size="12" text-anchor="middle" fill="#000" font-family='"Liberation Sans", sans-serif'>C</text><text transform="translate(150,45.5) scale(0.81,1)" x="92.59 107.41 129.63 137.04 144.44" y="0" font-size="12" text-anchor="middle" fill="#000" font-family='"Liberation Sans", sans-serif'>oe150</text><text transform="translate(150,45.5)" x="6.00 18.00 30.00 42.00" y="0" font-size="11.5" text-anchor="middle" fill="#000" font-family='"Liberation Sans", sans-serif'>移動平均</text><text transform="translate(302,45.5) scale(0.82,1)" x="62.20 84.15 98.78 113.41 150.00" y="0" font-size="12" text-anchor="middle" fill="#000" font-family='"Liberation Sans", sans-serif'>(ls,)</text><text transform="translate(302,45.5) scale(0.62,1)" x="101.61" y="0" font-size="12" text-anchor="middle" fill="#000" font-family='"Liberation Sans", sans-serif'>C</text><text transform="translate(302,45.5) scale(0.81,1)" x="92.59 107.41 129.63 137.04" y="0" font-size="12" text-anchor="middle" fill="#000" font-family='"Liberation Sans", sans-serif'>oe20</text><text transform="translate(302,45.5)" x="6.00 18.00 30.00 42.00" y="0" font-size="11.5" text-anchor="middle" fill="#000" font-family='"Liberation Sans", sans-serif'>移動平均</text><text transform="translate(448,45.5) scale(0.82,1)" x="62.20 84.15 98.78 113.41 150.00" y="0" font-size="12" text-anchor="middle" fill="#000" font-family='"Liberation Sans", sans-serif'>(ls,)</text><text transform="translate(448,45.5) scale(0.62,1)" x="101.61" y="0" font-size="12" text-anchor="middle" fill="#000" font-family='"Liberation Sans", sans-serif'>C</text><text transform="translate(448,45.5) scale(0.81,1)" x="92.59 107.41 129.63 137.04" y="0" font-size="12" text-anchor="middle" fill="#000" font-family='"Liberation Sans", sans-serif'>oe40</text><text transform="translate(448,45.5)" x="6.00 18.00 30.00 42.00" y="0" font-size="11.5" text-anchor="middle" fill="#000" font-family='"Liberation Sans", sans-serif'>移動平均</text><text transform="translate(594,45.5) scale(0.82,1)" x="62.20 84.15 98.78 113.41 150.00" y="0" font-size="12" text-anchor="middle" fill="#000" font-family='"Liberation Sans", sans-serif'>(ls,)</text><text transform="translate(594,45.5) scale(0.62,1)" x="101.61" y="0" font-size="12" text-anchor="middle" fill="#000" font-family='"Liberation Sans", sans-serif'>C</text><text transform="translate(594,45.5) scale(0.81,1)" x="92.59 107.41 129.63 137.04" y="0" font-size="12" text-anchor="middle" fill="#000" font-family='"Liberation Sans", sans-serif'>oe25</text><text transform="translate(594,45.5)" x="6.00 18.00 30.00 42.00" y="0" font-size="11.5" text-anchor="middle" fill="#000" font-family='"Liberation Sans", sans-serif'>移動平均</text><text transform="translate(4,263)" x="6.00 18.00 30.00" y="0" font-size="11.5" text-anchor="middle" fill="#000" font-family='"Liberation Sans", sans-serif'>出来高</text><text transform="translate(4,361) scale(0.54,1)" x="5.56" y="0" font-size="12" text-anchor="middle" fill="#000" font-family='"Liberation Sans", sans-serif'>M</text><text transform="translate(4,361) scale(0.67,1)" x="13.43" y="0" font-size="12" text-anchor="middle" fill="#000" font-family='"Liberation Sans", sans-serif'>A</text><text transform="translate(4,361) scale(0.62,1)" x="24.19 33.87" y="0" font-size="12" text-anchor="middle" fill="#000" font-family='"Liberation Sans", sans-serif'>CD</text><text transform="translate(4,361) scale(0.82,1)" x="32.93 62.20 91.46 120.73" y="0" font-size="12" text-anchor="middle" fill="#000" font-family='"Liberation Sans", sans-serif'>(,,)</text><text transform="translate(4,361) scale(0.81,1)" x="48.15 55.56 77.78 85.19 107.41" y="0" font-size="12" text-anchor="middle" fill="#000" font-family='"Liberation Sans", sans-serif'>12269</text><text transform="translate(4,459) scale(0.82,1)" x="62.20 84.15 98.78 113.41 142.68" y="0" font-size="12" text-anchor="middle" fill="#000" font-family='"Liberation Sans", sans-serif'>(ls,)</text><text transform="translate(4,459) scale(0.62,1)" x="101.61" y="0" font-size="12" text-anchor="middle" fill="#000" font-family='"Liberation Sans", sans-serif'>C</text><text transform="translate(4,459) scale(0.81,1)" x="92.59 107.41 129.63" y="0" font-size="12" text-anchor="middle" fill="#000" font-family='"Liberation Sans", sans-serif'>oe5</text><text transform="translate(4,459)" x="6.00 18.00 30.00 42.00" y="0" font-size="11.5" text-anchor="middle" fill="#000" font-family='"Liberation Sans", sans-serif'>移動平均</text><text transform="translate(144,459) scale(0.82,1)" x="193.90 223.17 245.12 274.39 310.98" y="0" font-size="12" text-anchor="middle" fill="#000" font-family='"Liberation Sans", sans-serif'>(,,,)</text><text transform="translate(144,459) scale(0.81,1)" x="211.11 218.52 240.74 262.96 270.37 292.59 300.00" y="0" font-size="12" text-anchor="middle" fill="#000" font-family='"Liberation Sans", sans-serif'>1438020</text><text transform="translate(144,459)" x="6.00 18.00 30.00 42.00 54.00 66.00 78.00 90.00 102.00 114.00 126.00 138.00 150.00" y="0" font-size="11.5" text-anchor="middle" fill="#000" font-family='"Liberation Sans", sans-serif'>スロー・ストキャスティクス</text>
<rect x="1087" y="19" width="1" height="556" fill="#000"/><rect x="0" y="544" width="1149" height="1" fill="#000"/><rect x="0" y="334" width="1087" height="1" fill="#000"/><rect x="1087" y="37" width="6" height="1" fill="#000"/><text transform="translate(1096,42.5) scale(0.81,1)" x="3.70 11.11 25.93 33.33 40.74" y="0" font-size="12" text-anchor="middle" fill="#000" font-family='"Liberation Sans", sans-serif'>14750</text><text transform="translate(1096,42.5) scale(0.82,1)" x="18.29" y="0" font-size="12" text-anchor="middle" fill="#000" font-family='"Liberation Sans", sans-serif'>,</text><rect x="1087" y="79" width="6" height="1" fill="#000"/><text transform="translate(1096,84.5) scale(0.81,1)" x="3.70 11.11 25.93 33.33 40.74" y="0" font-size="12" text-anchor="middle" fill="#000" font-family='"Liberation Sans", sans-serif'>14715</text><text transform="translate(1096,84.5) scale(0.82,1)" x="18.29" y="0" font-size="12" text-anchor="middle" fill="#000" font-family='"Liberation Sans", sans-serif'>,</text><rect x="1087" y="116" width="6" height="1" fill="#000"/><text transform="translate(1096,121.5) scale(0.81,1)" x="3.70 11.11 25.93 33.33 40.74" y="0" font-size="12" text-anchor="middle" fill="#000" font-family='"Liberation Sans", sans-serif'>14685</text><text transform="translate(1096,121.5) scale(0.82,1)" x="18.29" y="0" font-size="12" text-anchor="middle" fill="#000" font-family='"Liberation Sans", sans-serif'>,</text><rect x="1087" y="153" width="6" height="1" fill="#000"/><text transform="translate(1096,158.5) scale(0.81,1)" x="3.70 11.11 25.93 33.33 40.74" y="0" font-size="12" text-anchor="middle" fill="#000" font-family='"Liberation Sans", sans-serif'>14655</text><text transform="translate(1096,158.5) scale(0.82,1)" x="18.29" y="0" font-size="12" text-anchor="middle" fill="#000" font-family='"Liberation Sans", sans-serif'>,</text><rect x="1087" y="190" width="6" height="1" fill="#000"/><text transform="translate(1096,195.5) scale(0.81,1)" x="3.70 11.11 25.93 33.33 40.74" y="0" font-size="12" text-anchor="middle" fill="#000" font-family='"Liberation Sans", sans-serif'>14625</text><text transform="translate(1096,195.5) scale(0.82,1)" x="18.29" y="0" font-size="12" text-anchor="middle" fill="#000" font-family='"Liberation Sans", sans-serif'>,</text><rect x="1087" y="227" width="6" height="1" fill="#000"/><text transform="translate(1096,232.5) scale(0.81,1)" x="3.70 11.11 25.93 33.33 40.74" y="0" font-size="12" text-anchor="middle" fill="#000" font-family='"Liberation Sans", sans-serif'>14595</text><text transform="translate(1096,232.5) scale(0.82,1)" x="18.29" y="0" font-size="12" text-anchor="middle" fill="#000" font-family='"Liberation Sans", sans-serif'>,</text><rect x="1087" y="268" width="6" height="1" fill="#000"/><text transform="translate(1096,273.5) scale(0.81,1)" x="3.70 11.11 18.52 33.33 40.74" y="0" font-size="12" text-anchor="middle" fill="#000" font-family='"Liberation Sans", sans-serif'>35500</text><text transform="translate(1096,273.5) scale(0.82,1)" x="25.61" y="0" font-size="12" text-anchor="middle" fill="#000" font-family='"Liberation Sans", sans-serif'>.</text><rect x="1087" y="305" width="6" height="1" fill="#000"/><text transform="translate(1096,310.5) scale(0.81,1)" x="3.70 11.11 18.52 33.33 40.74" y="0" font-size="12" text-anchor="middle" fill="#000" font-family='"Liberation Sans", sans-serif'>15500</text><text transform="translate(1096,310.5) scale(0.82,1)" x="25.61" y="0" font-size="12" text-anchor="middle" fill="#000" font-family='"Liberation Sans", sans-serif'>.</text><rect x="1087" y="366" width="6" height="1" fill="#000"/><text transform="translate(1096,371.5) scale(0.81,1)" x="3.70 11.11 25.93 33.33" y="0" font-size="12" text-anchor="middle" fill="#000" font-family='"Liberation Sans", sans-serif'>2350</text><text transform="translate(1096,371.5) scale(0.82,1)" x="18.29" y="0" font-size="12" text-anchor="middle" fill="#000" font-family='"Liberation Sans", sans-serif'>.</text><rect x="1087" y="403" width="6" height="1" fill="#000"/><text transform="translate(1096,408.5) scale(0.81,1)" x="3.70 18.52 25.93" y="0" font-size="12" text-anchor="middle" fill="#000" font-family='"Liberation Sans", sans-serif'>400</text><text transform="translate(1096,408.5) scale(0.82,1)" x="10.98" y="0" font-size="12" text-anchor="middle" fill="#000" font-family='"Liberation Sans", sans-serif'>.</text><rect x="1087" y="464" width="6" height="1" fill="#000"/><text transform="translate(1096,469.5) scale(0.81,1)" x="3.70 11.11 18.52 33.33 40.74" y="0" font-size="12" text-anchor="middle" fill="#000" font-family='"Liberation Sans", sans-serif'>10000</text><text transform="translate(1096,469.5) scale(0.82,1)" x="25.61" y="0" font-size="12" text-anchor="middle" fill="#000" font-family='"Liberation Sans", sans-serif'>.</text><rect x="1087" y="502" width="6" height="1" fill="#000"/><text transform="translate(1096,507.5) scale(0.81,1)" x="3.70 11.11 25.93 33.33" y="0" font-size="12" text-anchor="middle" fill="#000" font-family='"Liberation Sans", sans-serif'>4500</text><text transform="translate(1096,507.5) scale(0.82,1)" x="18.29" y="0" font-size="12" text-anchor="middle" fill="#000" font-family='"Liberation Sans", sans-serif'>.</text><rect x="30" y="545" width="1" height="9" fill="#000"/><text transform="translate(30,564) scale(0.81,1)" x="3.70 11.11 25.93 33.33" y="0" font-size="12" text-anchor="middle" fill="#000" font-family='"Liberation Sans", sans-serif'>1021</text><text transform="translate(30,564) scale(0.82,1)" x="18.29" y="0" font-size="12" text-anchor="middle" fill="#000" font-family='"Liberation Sans", sans-serif'>/</text><rect x="150" y="545" width="1" height="4" fill="#000"/><text transform="translate(150,564) scale(0.81,1)" x="3.70 11.11 25.93 33.33" y="0" font-size="12" text-anchor="middle" fill="#000" font-family='"Liberation Sans", sans-serif'>1040</text><text transform="translate(150,564) scale(0.82,1)" x="18.29" y="0" font-size="12" text-anchor="middle" fill="#000" font-family='"Liberation Sans", sans-serif'>:</text><rect x="246" y="545" width="1" height="4" fill="#000"/><text transform="translate(246,564) scale(0.81,1)" x="3.70 11.11 25.93 33.33" y="0" font-size="12" text-anchor="middle" fill="#000" font-family='"Liberation Sans", sans-serif'>1200</text><text transform="translate(246,564) scale(0.82,1)" x="18.29" y="0" font-size="12" text-anchor="middle" fill="#000" font-family='"Liberation Sans", sans-serif'>:</text><rect x="342" y="545" width="1" height="4" fill="#000"/><text transform="translate(342,564) scale(0.81,1)" x="3.70 11.11 25.93 33.33" y="0" font-size="12" text-anchor="middle" fill="#000" font-family='"Liberation Sans", sans-serif'>1320</text><text transform="translate(342,564) scale(0.82,1)" x="18.29" y="0" font-size="12" text-anchor="middle" fill="#000" font-family='"Liberation Sans", sans-serif'>:</text><rect x="438" y="545" width="1" height="4" fill="#000"/><text transform="translate(438,564) scale(0.81,1)" x="3.70 11.11 25.93 33.33" y="0" font-size="12" text-anchor="middle" fill="#000" font-family='"Liberation Sans", sans-serif'>1440</text><text transform="translate(438,564) scale(0.82,1)" x="18.29" y="0" font-size="12" text-anchor="middle" fill="#000" font-family='"Liberation Sans", sans-serif'>:</text><rect x="540" y="545" width="1" height="4" fill="#000"/><text transform="translate(540,564) scale(0.81,1)" x="3.70 11.11 25.93 33.33" y="0" font-size="12" text-anchor="middle" fill="#000" font-family='"Liberation Sans", sans-serif'>1720</text><text transform="translate(540,564) scale(0.82,1)" x="18.29" y="0" font-size="12" text-anchor="middle" fill="#000" font-family='"Liberation Sans", sans-serif'>:</text><rect x="636" y="545" width="1" height="4" fill="#000"/><text transform="translate(636,564) scale(0.81,1)" x="3.70 11.11 25.93 33.33" y="0" font-size="12" text-anchor="middle" fill="#000" font-family='"Liberation Sans", sans-serif'>1840</text><text transform="translate(636,564) scale(0.82,1)" x="18.29" y="0" font-size="12" text-anchor="middle" fill="#000" font-family='"Liberation Sans", sans-serif'>:</text><rect x="732" y="545" width="1" height="4" fill="#000"/><text transform="translate(732,564) scale(0.81,1)" x="3.70 11.11 25.93 33.33" y="0" font-size="12" text-anchor="middle" fill="#000" font-family='"Liberation Sans", sans-serif'>2000</text><text transform="translate(732,564) scale(0.82,1)" x="18.29" y="0" font-size="12" text-anchor="middle" fill="#000" font-family='"Liberation Sans", sans-serif'>:</text><rect x="828" y="545" width="1" height="4" fill="#000"/><text transform="translate(828,564) scale(0.81,1)" x="3.70 11.11 25.93 33.33" y="0" font-size="12" text-anchor="middle" fill="#000" font-family='"Liberation Sans", sans-serif'>2120</text><text transform="translate(828,564) scale(0.82,1)" x="18.29" y="0" font-size="12" text-anchor="middle" fill="#000" font-family='"Liberation Sans", sans-serif'>:</text><rect x="924" y="545" width="1" height="4" fill="#000"/><text transform="translate(924,564) scale(0.81,1)" x="3.70 11.11 25.93 33.33" y="0" font-size="12" text-anchor="middle" fill="#000" font-family='"Liberation Sans", sans-serif'>2240</text><text transform="translate(924,564) scale(0.82,1)" x="18.29" y="0" font-size="12" text-anchor="middle" fill="#000" font-family='"Liberation Sans", sans-serif'>:</text><rect x="1020" y="545" width="1" height="9" fill="#000"/><text transform="translate(1020,564) scale(0.81,1)" x="3.70 11.11 25.93 33.33" y="0" font-size="12" text-anchor="middle" fill="#000" font-family='"Liberation Sans", sans-serif'>1022</text><text transform="translate(1020,564) scale(0.82,1)" x="18.29" y="0" font-size="12" text-anchor="middle" fill="#000" font-family='"Liberation Sans", sans-serif'>/</text><rect x="1135" y="21" width="14" height="13" fill="#fff"/><rect x="1135" y="21" width="14" height="1" fill="#c4c4c4"/><rect x="1135" y="21" width="1" height="13" fill="#c4c4c4"/><rect x="1135" y="33" width="14" height="1" fill="#888"/><polygon points="1137.5,25.3 1147.5,25.3 1142.5,30.5" fill="#808080" stroke="#000" stroke-width="1" stroke-linejoin="miter"/><rect x="1135" y="253" width="14" height="13" fill="#fff"/><rect x="1135" y="253" width="14" height="1" fill="#c4c4c4"/><rect x="1135" y="253" width="1" height="13" fill="#c4c4c4"/><rect x="1135" y="265" width="14" height="1" fill="#888"/><polygon points="1137.5,257.3 1147.5,257.3 1142.5,262.5" fill="#808080" stroke="#000" stroke-width="1" stroke-linejoin="miter"/><rect x="1135" y="351" width="14" height="13" fill="#fff"/><rect x="1135" y="351" width="14" height="1" fill="#c4c4c4"/><rect x="1135" y="351" width="1" height="13" fill="#c4c4c4"/><rect x="1135" y="363" width="14" height="1" fill="#888"/><polygon points="1137.5,355.3 1147.5,355.3 1142.5,360.5" fill="#808080" stroke="#000" stroke-width="1" stroke-linejoin="miter"/><rect x="1135" y="448" width="14" height="13" fill="#fff"/><rect x="1135" y="448" width="14" height="1" fill="#c4c4c4"/><rect x="1135" y="448" width="1" height="13" fill="#c4c4c4"/><rect x="1135" y="460" width="14" height="1" fill="#888"/><polygon points="1137.5,452.3 1147.5,452.3 1142.5,457.5" fill="#808080" stroke="#000" stroke-width="1" stroke-linejoin="miter"/><rect x="1090.5" y="331.5" width="39" height="13" fill="#fff" stroke="#000"/><path d="M1094.5,334.5 L1102.5,342.5 M1102.5,334.5 L1094.5,342.5" stroke="#000" stroke-width="1"/><text transform="translate(1110,342.5) scale(0.81,1)" x="3.70 11.11 18.52" y="0" font-size="12" text-anchor="middle" fill="#000" font-family='"Liberation Sans", sans-serif'>100</text>
<defs><linearGradient id="bg" x1="0" y1="0" x2="0" y2="1"><stop offset="0" stop-color="#f4f4f4"/><stop offset="1" stop-color="#cfcfcf"/></linearGradient><linearGradient id="bgp" x1="0" y1="0" x2="0" y2="1"><stop offset="0" stop-color="#c4c4c4"/><stop offset="1" stop-color="#b4b4b4"/></linearGradient></defs><rect x="0" y="0" width="1149" height="19" fill="#d6d6da"/><rect x="0" y="0" width="16" height="16" fill="#000"/><rect x="0" y="0" width="15" height="15" fill="url(#bg)"/><rect x="1" y="0" width="1" height="15" fill="#fff"/><polygon points="3,5 11,5 7,10" fill="#000"/><rect x="20" y="0" width="79" height="17" fill="#fff"/><rect x="20" y="0" width="1" height="16" fill="#a0a0a0"/><rect x="20" y="15" width="79" height="1" fill="#e6e6e6"/><rect x="83" y="0" width="16" height="14" fill="#ececec"/><rect x="99" y="0" width="1" height="16" fill="#c8c8c8"/><polygon points="87,5 95,5 91,9" fill="#000"/><text x="24" y="10.8" font-size="11.5" fill="#000" font-family="Liberation Sans, sans-serif">先物</text><rect x="101" y="0" width="113" height="17" fill="#fff"/><rect x="101" y="0" width="1" height="16" fill="#a0a0a0"/><rect x="101" y="15" width="113" height="1" fill="#e6e6e6"/><rect x="198" y="0" width="16" height="14" fill="#ececec"/><rect x="214" y="0" width="1" height="16" fill="#c8c8c8"/><polygon points="202,5 210,5 206,9" fill="#000"/><text x="105" y="10.8" font-size="11.5" fill="#000" font-family="Liberation Sans, sans-serif">日経225mini</text><rect x="217" y="0" width="87" height="17" fill="#fff"/><rect x="217" y="0" width="1" height="16" fill="#a0a0a0"/><rect x="217" y="15" width="87" height="1" fill="#e6e6e6"/><rect x="288" y="0" width="16" height="14" fill="#ececec"/><rect x="304" y="0" width="1" height="16" fill="#c8c8c8"/><polygon points="292,5 300,5 296,9" fill="#000"/><text x="221" y="10.8" font-size="11.5" fill="#000" font-family="Liberation Sans, sans-serif">13/12</text><rect x="310" y="0" width="20" height="16" fill="#dfe7ef"/><rect x="310" y="15" width="20" height="1" fill="#b4cbe0"/><text x="320.0" y="10.8" font-size="11.5" text-anchor="middle" font-family="Liberation Sans, sans-serif" textLength="10" lengthAdjust="spacingAndGlyphs">足</text><rect x="331" y="0" width="38" height="16" fill="#dcdcdc"/><rect x="331" y="14" width="38" height="2" fill="#f4f4f4"/><rect x="355" y="0" width="13" height="13" fill="#404040"/><polygon points="355,0 367,0 355,12" fill="#f0eeea"/><polygon points="367,0 367,12 355,12" fill="#d4d0c8"/><line x1="355" y1="12.5" x2="367.5" y2="0" stroke="#222" stroke-width="0.9"/><polygon points="357,4 359.5,1.5 362,4" fill="#000"/><text x="354" y="10.8" font-size="11.5" text-anchor="end" fill="#7a7a7a" font-family="Liberation Sans, sans-serif" textLength="5" lengthAdjust="spacingAndGlyphs">1</text><rect x="372" y="0" width="18" height="15" fill="#6a6a6a"/><rect x="372" y="0" width="17" height="14" fill="url(#bg)"/><rect x="372" y="0" width="1" height="14" fill="#fafafa"/><text x="380.5" y="10.8" font-size="11.5" text-anchor="middle" font-family="Liberation Sans, sans-serif" >日</text><rect x="392" y="0" width="18" height="15" fill="#6a6a6a"/><rect x="392" y="0" width="17" height="14" fill="url(#bg)"/><rect x="392" y="0" width="1" height="14" fill="#fafafa"/><text x="400.5" y="10.8" font-size="11.5" text-anchor="middle" font-family="Liberation Sans, sans-serif" >週</text><rect x="412" y="0" width="18" height="15" fill="#6a6a6a"/><rect x="412" y="0" width="17" height="14" fill="url(#bg)"/><rect x="412" y="0" width="1" height="14" fill="#fafafa"/><text x="420.5" y="10.8" font-size="11.5" text-anchor="middle" font-family="Liberation Sans, sans-serif" >月</text><rect x="432" y="0" width="18" height="15" fill="#6a6a6a"/><rect x="432" y="0" width="17" height="14" fill="url(#bgp)"/><rect x="432" y="0" width="1" height="14" fill="#fafafa"/><text x="440.5" y="10.8" font-size="11.5" text-anchor="middle" font-family="Liberation Sans, sans-serif" >分</text><rect x="452" y="0" width="18" height="15" fill="#6a6a6a"/><rect x="452" y="0" width="17" height="14" fill="url(#bg)"/><rect x="452" y="0" width="1" height="14" fill="#fafafa"/><text x="460.5" y="10.8" font-size="11.5" text-anchor="middle" font-family="Liberation Sans, sans-serif" >T</text><rect x="480" y="0" width="20" height="16" fill="#dfe7ef"/><rect x="480" y="15" width="20" height="1" fill="#b4cbe0"/><text x="490.0" y="10.8" font-size="11.5" text-anchor="middle" font-family="Liberation Sans, sans-serif" textLength="10" lengthAdjust="spacingAndGlyphs">分</text><rect x="502" y="0" width="36" height="16" fill="#ffffff"/><rect x="502" y="14" width="36" height="2" fill="#f4f4f4"/><rect x="524" y="0" width="13" height="13" fill="#404040"/><polygon points="524,0 536,0 524,12" fill="#f0eeea"/><polygon points="536,0 536,12 524,12" fill="#d4d0c8"/><line x1="524" y1="12.5" x2="536.5" y2="0" stroke="#222" stroke-width="0.9"/><polygon points="526,4 528.5,1.5 531,4" fill="#000"/><text x="523" y="10.8" font-size="11.5" text-anchor="end" fill="#000" font-family="Liberation Sans, sans-serif" textLength="5" lengthAdjust="spacingAndGlyphs">5</text><rect x="541" y="0" width="29" height="16" fill="#dfe7ef"/><rect x="541" y="15" width="29" height="1" fill="#b4cbe0"/><text x="555.5" y="10.8" font-size="11.5" text-anchor="middle" font-family="Liberation Sans, sans-serif" textLength="22" lengthAdjust="spacingAndGlyphs">本数</text><rect x="572" y="0" width="46" height="16" fill="#ffffff"/><rect x="572" y="14" width="46" height="2" fill="#f4f4f4"/><rect x="604" y="0" width="13" height="13" fill="#404040"/><polygon points="604,0 616,0 604,12" fill="#f0eeea"/><polygon points="616,0 616,12 604,12" fill="#d4d0c8"/><line x1="604" y1="12.5" x2="616.5" y2="0" stroke="#222" stroke-width="0.9"/><polygon points="606,4 608.5,1.5 611,4" fill="#000"/><text x="603" y="10.8" font-size="11.5" text-anchor="end" fill="#000" font-family="Liberation Sans, sans-serif" textLength="17" lengthAdjust="spacingAndGlyphs">500</text><rect x="622" y="0" width="34" height="15" fill="#6a6a6a"/><rect x="622" y="0" width="33" height="14" fill="url(#bg)"/><rect x="622" y="0" width="1" height="14" fill="#fafafa"/><text x="638.5" y="10.8" font-size="11.5" text-anchor="middle" font-family="Liberation Sans, sans-serif" textLength="21" lengthAdjust="spacingAndGlyphs">適用</text><rect x="677" y="0" width="59" height="15" fill="#6a6a6a"/><rect x="677" y="0" width="58" height="14" fill="url(#bg)"/><rect x="677" y="0" width="1" height="14" fill="#fafafa"/><text x="706.0" y="10.8" font-size="11.5" text-anchor="middle" font-family="Liberation Sans, sans-serif" textLength="45" lengthAdjust="spacingAndGlyphs">複数銘柄</text>
<defs><clipPath id="cm"><rect x="0" y="19" width="1087" height="230"/></clipPath><clipPath id="cp"><rect x="0" y="440" width="1087" height="104"/></clipPath></defs>
</svg></body></html>
